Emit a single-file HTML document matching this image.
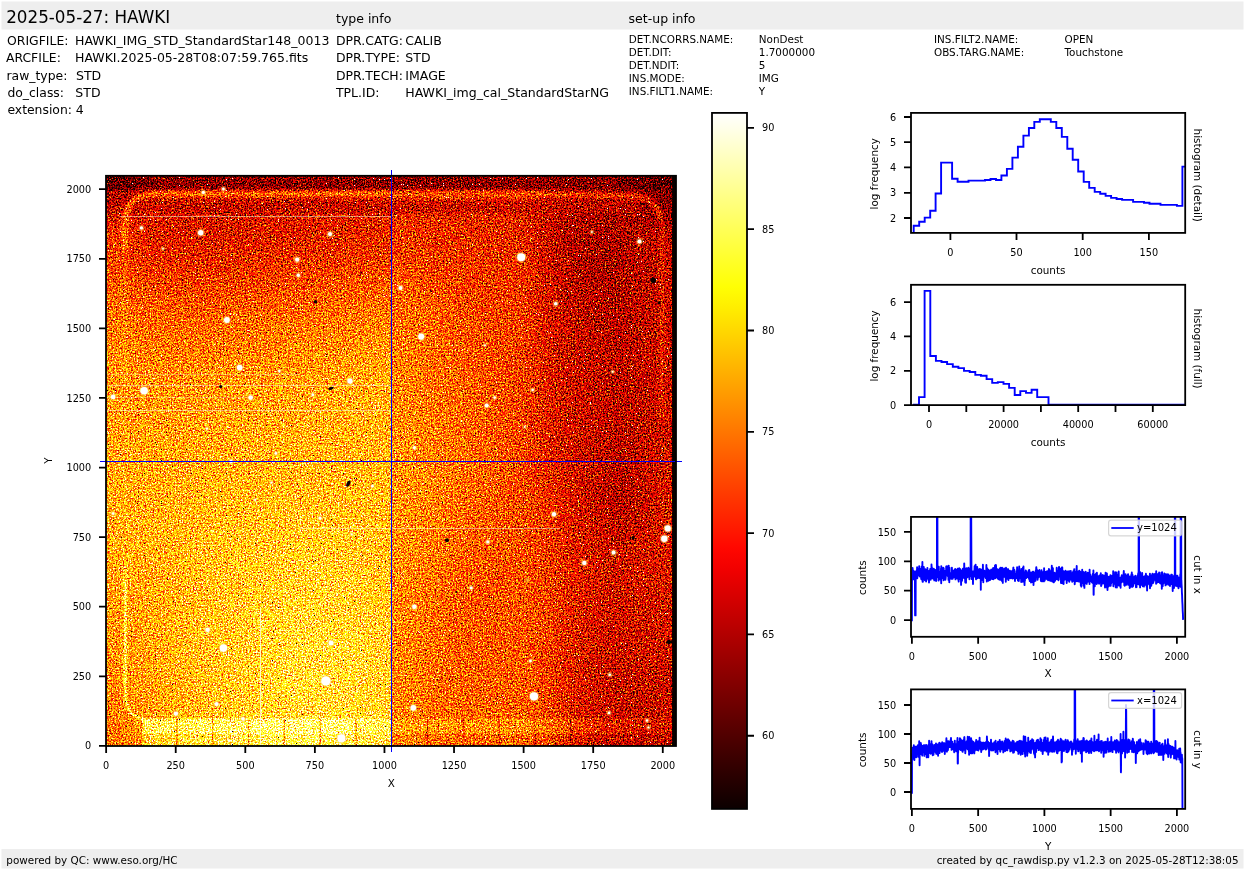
<!DOCTYPE html>
<html><head><meta charset="utf-8"><title>HAWKI raw display</title>
<style>
html,body{margin:0;padding:0;background:#fff;overflow:hidden}
svg{display:block}
text{font-family:'DejaVu Sans','Liberation Sans',sans-serif;fill:#000;white-space:pre}
</style></head><body>
<svg width="1245" height="870" viewBox="0 0 1245 870">
<rect width="1245" height="870" fill="#ffffff"/>
<g opacity="0.999">
<rect x="1.5" y="1.5" width="1242" height="28" fill="#eeeeee"/>
<rect x="1.5" y="849" width="1242" height="19.5" fill="#eeeeee"/>
<text x="6.2" y="23.4" font-size="16.75" text-anchor="start" >2025-05-27: HAWKI</text>
<text x="336" y="22.6" font-size="12.5" text-anchor="start" >type info</text>
<text x="628.6" y="22.6" font-size="12.5" text-anchor="start" >set-up info</text>
<text x="7.1" y="45.1" font-size="12.4" text-anchor="start" >ORIGFILE:</text>
<text x="75" y="45.1" font-size="12.52" text-anchor="start" >HAWKI_IMG_STD_StandardStar148_0013</text>
<text x="6.0" y="61.8" font-size="12.4" text-anchor="start" >ARCFILE:</text>
<text x="75" y="61.8" font-size="12.52" text-anchor="start" >HAWKI.2025-05-28T08:07:59.765.fits</text>
<text x="6.5" y="80.3" font-size="12.4" text-anchor="start" >raw_type:</text>
<text x="76" y="80.3" font-size="12.52" text-anchor="start" >STD</text>
<text x="7.4" y="96.9" font-size="12.4" text-anchor="start" >do_class:</text>
<text x="75.3" y="96.9" font-size="12.52" text-anchor="start" >STD</text>
<text x="7.4" y="114.2" font-size="12.4" text-anchor="start" >extension:</text>
<text x="75.7" y="114.2" font-size="12.52" text-anchor="start" >4</text>
<text x="336" y="45.1" font-size="12.45" text-anchor="start" >DPR.CATG:</text>
<text x="405.3" y="45.1" font-size="12.52" text-anchor="start" >CALIB</text>
<text x="336" y="61.8" font-size="12.45" text-anchor="start" >DPR.TYPE:</text>
<text x="405.3" y="61.8" font-size="12.52" text-anchor="start" >STD</text>
<text x="336" y="80.3" font-size="12.45" text-anchor="start" >DPR.TECH:</text>
<text x="405.3" y="80.3" font-size="12.52" text-anchor="start" >IMAGE</text>
<text x="336" y="96.9" font-size="12.45" text-anchor="start" >TPL.ID:</text>
<text x="405.3" y="96.9" font-size="12.52" text-anchor="start" >HAWKI_img_cal_StandardStarNG</text>
<text x="628.8" y="42.7" font-size="10.4" text-anchor="start" >DET.NCORRS.NAME:</text>
<text x="758.8" y="42.7" font-size="10.4" text-anchor="start" >NonDest</text>
<text x="628.8" y="55.7" font-size="10.4" text-anchor="start" >DET.DIT:</text>
<text x="758.8" y="55.7" font-size="10.4" text-anchor="start" >1.7000000</text>
<text x="628.8" y="68.6" font-size="10.4" text-anchor="start" >DET.NDIT:</text>
<text x="758.8" y="68.6" font-size="10.4" text-anchor="start" >5</text>
<text x="628.8" y="81.6" font-size="10.4" text-anchor="start" >INS.MODE:</text>
<text x="758.8" y="81.6" font-size="10.4" text-anchor="start" >IMG</text>
<text x="628.8" y="94.6" font-size="10.4" text-anchor="start" >INS.FILT1.NAME:</text>
<text x="758.8" y="94.6" font-size="10.4" text-anchor="start" >Y</text>
<text x="934" y="42.7" font-size="10.4" text-anchor="start" >INS.FILT2.NAME:</text>
<text x="1064.5" y="42.7" font-size="10.4" text-anchor="start" >OPEN</text>
<text x="934" y="55.7" font-size="10.4" text-anchor="start" >OBS.TARG.NAME:</text>
<text x="1064.5" y="55.7" font-size="10.4" text-anchor="start" >Touchstone</text>
<text x="6.3" y="863.6" font-size="10.4" text-anchor="start" >powered by QC: www.eso.org/HC</text>
<text x="1238.6" y="863.6" font-size="10.4" text-anchor="end" >created by qc_rawdisp.py v1.2.3 on 2025-05-28T12:38:05</text>
<defs>
<filter id="hot" filterUnits="userSpaceOnUse" x="106.0" y="175.8" width="570.0" height="570.2" color-interpolation-filters="sRGB">
<feTurbulence type="fractalNoise" baseFrequency="0.6" numOctaves="2" seed="7" result="ta"/>
<feColorMatrix in="ta" type="matrix" values="0 0 0 1 0  0 0 0 1 0  0 0 0 1 0  0 0 0 0 1" result="na"/>
<feTurbulence type="fractalNoise" baseFrequency="0.73" numOctaves="2" seed="31" result="tb"/>
<feColorMatrix in="tb" type="matrix" values="0 0 0 1 0  0 0 0 1 0  0 0 0 1 0  0 0 0 0 1" result="nb"/>
<feComposite in="na" in2="nb" operator="arithmetic" k1="0" k2="0.5" k3="0.5" k4="0" result="n"/>
<feTurbulence type="fractalNoise" baseFrequency="0.83" numOctaves="1" seed="23" result="t2"/>
<feColorMatrix in="t2" type="matrix" values="0 0 0 1 0  0 0 0 1 0  0 0 0 1 0  0 0 0 0 1" result="n2"/>
<feComponentTransfer in="n2" result="dk"><feFuncR type="discrete" tableValues="1 1 1 1 1 1 1 1 1 1 1 0 0 0 0 0 0 0 0 0 0 0 0 0 0 0 0 0 0 0 0 0 0 0 0 0 0 0 0 0 0 0 0 0 0 0 0 0 0 0"/><feFuncG type="discrete" tableValues="1 1 1 1 1 1 1 1 1 1 1 0 0 0 0 0 0 0 0 0 0 0 0 0 0 0 0 0 0 0 0 0 0 0 0 0 0 0 0 0 0 0 0 0 0 0 0 0 0 0"/><feFuncB type="discrete" tableValues="1 1 1 1 1 1 1 1 1 1 1 0 0 0 0 0 0 0 0 0 0 0 0 0 0 0 0 0 0 0 0 0 0 0 0 0 0 0 0 0 0 0 0 0 0 0 0 0 0 0"/></feComponentTransfer>
<feComponentTransfer in="n2" result="wh"><feFuncR type="discrete" tableValues="0 0 0 0 0 0 0 0 0 0 0 0 0 0 0 0 0 0 0 0 0 0 0 0 0 0 0 0 0 0 0 0 0 0 0 0 0 0 1 1 1 1 1 1 1 1 1 1 1 1"/><feFuncG type="discrete" tableValues="0 0 0 0 0 0 0 0 0 0 0 0 0 0 0 0 0 0 0 0 0 0 0 0 0 0 0 0 0 0 0 0 0 0 0 0 0 0 1 1 1 1 1 1 1 1 1 1 1 1"/><feFuncB type="discrete" tableValues="0 0 0 0 0 0 0 0 0 0 0 0 0 0 0 0 0 0 0 0 0 0 0 0 0 0 0 0 0 0 0 0 0 0 0 0 0 0 1 1 1 1 1 1 1 1 1 1 1 1"/></feComponentTransfer>
<feComposite in="SourceGraphic" in2="n" operator="arithmetic" k1="0" k2="1" k3="1.7" k4="-0.85" result="v0"/>
<feComposite in="v0" in2="dk" operator="arithmetic" k1="0" k2="1" k3="-1" k4="0" result="v1"/>
<feComposite in="v1" in2="wh" operator="arithmetic" k1="0" k2="1" k3="1" k4="0" result="v"/>
<feComponentTransfer in="v"><feFuncR type="table" tableValues="0.042 0.083 0.124 0.165 0.206 0.247 0.288 0.329 0.370 0.411 0.452 0.493 0.534 0.575 0.616 0.657 0.698 0.739 0.780 0.821 0.862 0.903 0.944 0.985 1.000 1.000 1.000 1.000 1.000 1.000 1.000 1.000 1.000 1.000 1.000 1.000 1.000 1.000 1.000 1.000 1.000 1.000 1.000 1.000 1.000 1.000 1.000 1.000 1.000 1.000 1.000 1.000 1.000 1.000 1.000 1.000 1.000 1.000 1.000 1.000 1.000 1.000 1.000 1.000 1.000"/><feFuncG type="table" tableValues="0.000 0.000 0.000 0.000 0.000 0.000 0.000 0.000 0.000 0.000 0.000 0.000 0.000 0.000 0.000 0.000 0.000 0.000 0.000 0.000 0.000 0.000 0.000 0.000 0.026 0.067 0.108 0.149 0.190 0.231 0.272 0.313 0.354 0.395 0.436 0.477 0.518 0.559 0.600 0.641 0.682 0.723 0.764 0.805 0.846 0.887 0.928 0.969 1.000 1.000 1.000 1.000 1.000 1.000 1.000 1.000 1.000 1.000 1.000 1.000 1.000 1.000 1.000 1.000 1.000"/><feFuncB type="table" tableValues="0.000 0.000 0.000 0.000 0.000 0.000 0.000 0.000 0.000 0.000 0.000 0.000 0.000 0.000 0.000 0.000 0.000 0.000 0.000 0.000 0.000 0.000 0.000 0.000 0.000 0.000 0.000 0.000 0.000 0.000 0.000 0.000 0.000 0.000 0.000 0.000 0.000 0.000 0.000 0.000 0.000 0.000 0.000 0.000 0.000 0.000 0.000 0.000 0.016 0.077 0.139 0.200 0.262 0.323 0.385 0.446 0.508 0.569 0.631 0.692 0.754 0.815 0.877 0.938 1.000"/></feComponentTransfer>
</filter>
<filter id="blur" filterUnits="userSpaceOnUse" x="46.0" y="115.80000000000001" width="690.0" height="690.2" color-interpolation-filters="sRGB"><feGaussianBlur stdDeviation="9"/></filter>
<clipPath id="cL"><rect x="106.0" y="175.8" width="285.0" height="570.2"/></clipPath>
<clipPath id="cR"><rect x="391.0" y="175.8" width="285.0" height="570.2"/></clipPath>
<linearGradient id="gTop" x1="0" y1="0" x2="0" y2="1"><stop offset="0" stop-color="#000" stop-opacity="0.62"/><stop offset="0.45" stop-color="#000" stop-opacity="0.5"/><stop offset="0.85" stop-color="#000" stop-opacity="0.22"/><stop offset="1" stop-color="#000" stop-opacity="0"/></linearGradient>
<linearGradient id="gTop2" x1="0" y1="0" x2="0" y2="1"><stop offset="0" stop-color="#000" stop-opacity="0"/><stop offset="0.3" stop-color="#000" stop-opacity="0.16"/><stop offset="0.8" stop-color="#000" stop-opacity="0.12"/><stop offset="1" stop-color="#000" stop-opacity="0"/></linearGradient>
<radialGradient id="gTL" cx="106.0" cy="175.8" r="60" gradientUnits="userSpaceOnUse"><stop offset="0" stop-color="#000" stop-opacity="0.5"/><stop offset="0.5" stop-color="#000" stop-opacity="0.28"/><stop offset="1" stop-color="#000" stop-opacity="0"/></radialGradient>
<radialGradient id="gTR" cx="676.0" cy="175.8" r="70" gradientUnits="userSpaceOnUse"><stop offset="0" stop-color="#000" stop-opacity="0.6"/><stop offset="0.5" stop-color="#000" stop-opacity="0.3"/><stop offset="1" stop-color="#000" stop-opacity="0"/></radialGradient>
<linearGradient id="gBandL" x1="0" y1="0" x2="1" y2="0" gradientUnits="objectBoundingBox"><stop offset="0" stop-color="#ffffff" stop-opacity="0"/><stop offset="0.115" stop-color="#ffffff" stop-opacity="0.0"/><stop offset="0.13" stop-color="#ffffff" stop-opacity="0.3"/><stop offset="0.8" stop-color="#ffffff" stop-opacity="0.3"/><stop offset="1" stop-color="#ffffff" stop-opacity="0.15"/></linearGradient>
<linearGradient id="gBandR" x1="0" y1="0" x2="1" y2="0" gradientUnits="objectBoundingBox"><stop offset="0" stop-color="#ffffff" stop-opacity="0.16"/><stop offset="0.55" stop-color="#ffffff" stop-opacity="0.16"/><stop offset="0.75" stop-color="#ffffff" stop-opacity="0.1"/><stop offset="1" stop-color="#ffffff" stop-opacity="0.04"/></linearGradient>
<filter id="b2" filterUnits="userSpaceOnUse" x="86.0" y="155.8" width="610.0" height="610.2"><feGaussianBlur stdDeviation="1.6"/></filter>
</defs>
<g filter="url(#hot)">
<g clip-path="url(#cL)"><g filter="url(#blur)">
<rect x="61.0" y="130.8" width="69.0" height="69.0" fill="#656565"/>
<rect x="61.0" y="199.6" width="69.0" height="24.1" fill="#676767"/>
<rect x="61.0" y="223.3" width="69.0" height="24.1" fill="#6b6b6b"/>
<rect x="61.0" y="247.1" width="69.0" height="24.1" fill="#717171"/>
<rect x="61.0" y="270.8" width="69.0" height="24.1" fill="#7b7b7b"/>
<rect x="61.0" y="294.6" width="69.0" height="24.1" fill="#858585"/>
<rect x="61.0" y="318.3" width="69.0" height="24.1" fill="#8d8d8d"/>
<rect x="61.0" y="342.1" width="69.0" height="24.1" fill="#929292"/>
<rect x="61.0" y="365.8" width="69.0" height="24.1" fill="#979797"/>
<rect x="61.0" y="389.6" width="69.0" height="24.1" fill="#9b9b9b"/>
<rect x="61.0" y="413.3" width="69.0" height="24.1" fill="#9d9d9d"/>
<rect x="61.0" y="437.1" width="69.0" height="24.1" fill="#a0a0a0"/>
<rect x="61.0" y="460.8" width="69.0" height="24.1" fill="#a1a1a1"/>
<rect x="61.0" y="484.6" width="69.0" height="24.1" fill="#a3a3a3"/>
<rect x="61.0" y="508.3" width="69.0" height="24.0" fill="#a4a4a4"/>
<rect x="61.0" y="532.0" width="69.0" height="24.1" fill="#a3a3a3"/>
<rect x="61.0" y="555.8" width="69.0" height="24.1" fill="#a0a0a0"/>
<rect x="61.0" y="579.5" width="69.0" height="24.1" fill="#9d9d9d"/>
<rect x="61.0" y="603.3" width="69.0" height="24.1" fill="#9a9a9a"/>
<rect x="61.0" y="627.0" width="69.0" height="24.1" fill="#979797"/>
<rect x="61.0" y="650.8" width="69.0" height="24.1" fill="#959595"/>
<rect x="61.0" y="674.5" width="69.0" height="24.1" fill="#919191"/>
<rect x="61.0" y="698.3" width="69.0" height="24.1" fill="#8d8d8d"/>
<rect x="61.0" y="722.0" width="69.0" height="69.0" fill="#8a8a8a"/>
<rect x="129.8" y="130.8" width="24.1" height="69.0" fill="#5b5b5b"/>
<rect x="129.8" y="199.6" width="24.1" height="24.1" fill="#5b5b5b"/>
<rect x="129.8" y="223.3" width="24.1" height="24.1" fill="#5e5e5e"/>
<rect x="129.8" y="247.1" width="24.1" height="24.1" fill="#666666"/>
<rect x="129.8" y="270.8" width="24.1" height="24.1" fill="#727272"/>
<rect x="129.8" y="294.6" width="24.1" height="24.1" fill="#7e7e7e"/>
<rect x="129.8" y="318.3" width="24.1" height="24.1" fill="#878787"/>
<rect x="129.8" y="342.1" width="24.1" height="24.1" fill="#8e8e8e"/>
<rect x="129.8" y="365.8" width="24.1" height="24.1" fill="#959595"/>
<rect x="129.8" y="389.6" width="24.1" height="24.1" fill="#9a9a9a"/>
<rect x="129.8" y="413.3" width="24.1" height="24.1" fill="#9d9d9d"/>
<rect x="129.8" y="437.1" width="24.1" height="24.1" fill="#a0a0a0"/>
<rect x="129.8" y="460.8" width="24.1" height="24.1" fill="#a2a2a2"/>
<rect x="129.8" y="484.6" width="24.1" height="24.1" fill="#a4a4a4"/>
<rect x="129.8" y="508.3" width="24.1" height="24.0" fill="#a6a6a6"/>
<rect x="129.8" y="532.0" width="24.1" height="24.1" fill="#a5a5a5"/>
<rect x="129.8" y="555.8" width="24.1" height="24.1" fill="#a3a3a3"/>
<rect x="129.8" y="579.5" width="24.1" height="24.1" fill="#a2a2a2"/>
<rect x="129.8" y="603.3" width="24.1" height="24.1" fill="#a0a0a0"/>
<rect x="129.8" y="627.0" width="24.1" height="24.1" fill="#9f9f9f"/>
<rect x="129.8" y="650.8" width="24.1" height="24.1" fill="#9d9d9d"/>
<rect x="129.8" y="674.5" width="24.1" height="24.1" fill="#9c9c9c"/>
<rect x="129.8" y="698.3" width="24.1" height="24.1" fill="#999999"/>
<rect x="129.8" y="722.0" width="24.1" height="69.0" fill="#979797"/>
<rect x="153.5" y="130.8" width="24.1" height="69.0" fill="#585858"/>
<rect x="153.5" y="199.6" width="24.1" height="24.1" fill="#585858"/>
<rect x="153.5" y="223.3" width="24.1" height="24.1" fill="#5c5c5c"/>
<rect x="153.5" y="247.1" width="24.1" height="24.1" fill="#646464"/>
<rect x="153.5" y="270.8" width="24.1" height="24.1" fill="#707070"/>
<rect x="153.5" y="294.6" width="24.1" height="24.1" fill="#7c7c7c"/>
<rect x="153.5" y="318.3" width="24.1" height="24.1" fill="#868686"/>
<rect x="153.5" y="342.1" width="24.1" height="24.1" fill="#8d8d8d"/>
<rect x="153.5" y="365.8" width="24.1" height="24.1" fill="#959595"/>
<rect x="153.5" y="389.6" width="24.1" height="24.1" fill="#9a9a9a"/>
<rect x="153.5" y="413.3" width="24.1" height="24.1" fill="#9d9d9d"/>
<rect x="153.5" y="437.1" width="24.1" height="24.1" fill="#a1a1a1"/>
<rect x="153.5" y="460.8" width="24.1" height="24.1" fill="#a3a3a3"/>
<rect x="153.5" y="484.6" width="24.1" height="24.1" fill="#a5a5a5"/>
<rect x="153.5" y="508.3" width="24.1" height="24.0" fill="#a7a7a7"/>
<rect x="153.5" y="532.0" width="24.1" height="24.1" fill="#a8a8a8"/>
<rect x="153.5" y="555.8" width="24.1" height="24.1" fill="#a7a7a7"/>
<rect x="153.5" y="579.5" width="24.1" height="24.1" fill="#a6a6a6"/>
<rect x="153.5" y="603.3" width="24.1" height="24.1" fill="#a5a5a5"/>
<rect x="153.5" y="627.0" width="24.1" height="24.1" fill="#a5a5a5"/>
<rect x="153.5" y="650.8" width="24.1" height="24.1" fill="#a4a4a4"/>
<rect x="153.5" y="674.5" width="24.1" height="24.1" fill="#a3a3a3"/>
<rect x="153.5" y="698.3" width="24.1" height="24.1" fill="#a0a0a0"/>
<rect x="153.5" y="722.0" width="24.1" height="69.0" fill="#9f9f9f"/>
<rect x="177.2" y="130.8" width="24.1" height="69.0" fill="#555555"/>
<rect x="177.2" y="199.6" width="24.1" height="24.1" fill="#555555"/>
<rect x="177.2" y="223.3" width="24.1" height="24.1" fill="#5a5a5a"/>
<rect x="177.2" y="247.1" width="24.1" height="24.1" fill="#626262"/>
<rect x="177.2" y="270.8" width="24.1" height="24.1" fill="#6e6e6e"/>
<rect x="177.2" y="294.6" width="24.1" height="24.1" fill="#7a7a7a"/>
<rect x="177.2" y="318.3" width="24.1" height="24.1" fill="#848484"/>
<rect x="177.2" y="342.1" width="24.1" height="24.1" fill="#8d8d8d"/>
<rect x="177.2" y="365.8" width="24.1" height="24.1" fill="#959595"/>
<rect x="177.2" y="389.6" width="24.1" height="24.1" fill="#9b9b9b"/>
<rect x="177.2" y="413.3" width="24.1" height="24.1" fill="#9e9e9e"/>
<rect x="177.2" y="437.1" width="24.1" height="24.1" fill="#a1a1a1"/>
<rect x="177.2" y="460.8" width="24.1" height="24.1" fill="#a4a4a4"/>
<rect x="177.2" y="484.6" width="24.1" height="24.1" fill="#a7a7a7"/>
<rect x="177.2" y="508.3" width="24.1" height="24.0" fill="#a9a9a9"/>
<rect x="177.2" y="532.0" width="24.1" height="24.1" fill="#aaaaaa"/>
<rect x="177.2" y="555.8" width="24.1" height="24.1" fill="#ababab"/>
<rect x="177.2" y="579.5" width="24.1" height="24.1" fill="#ababab"/>
<rect x="177.2" y="603.3" width="24.1" height="24.1" fill="#ababab"/>
<rect x="177.2" y="627.0" width="24.1" height="24.1" fill="#ababab"/>
<rect x="177.2" y="650.8" width="24.1" height="24.1" fill="#aaaaaa"/>
<rect x="177.2" y="674.5" width="24.1" height="24.1" fill="#aaaaaa"/>
<rect x="177.2" y="698.3" width="24.1" height="24.1" fill="#a8a8a8"/>
<rect x="177.2" y="722.0" width="24.1" height="69.0" fill="#a7a7a7"/>
<rect x="201.0" y="130.8" width="24.1" height="69.0" fill="#545454"/>
<rect x="201.0" y="199.6" width="24.1" height="24.1" fill="#545454"/>
<rect x="201.0" y="223.3" width="24.1" height="24.1" fill="#595959"/>
<rect x="201.0" y="247.1" width="24.1" height="24.1" fill="#626262"/>
<rect x="201.0" y="270.8" width="24.1" height="24.1" fill="#6e6e6e"/>
<rect x="201.0" y="294.6" width="24.1" height="24.1" fill="#7b7b7b"/>
<rect x="201.0" y="318.3" width="24.1" height="24.1" fill="#858585"/>
<rect x="201.0" y="342.1" width="24.1" height="24.1" fill="#8d8d8d"/>
<rect x="201.0" y="365.8" width="24.1" height="24.1" fill="#969696"/>
<rect x="201.0" y="389.6" width="24.1" height="24.1" fill="#9c9c9c"/>
<rect x="201.0" y="413.3" width="24.1" height="24.1" fill="#9f9f9f"/>
<rect x="201.0" y="437.1" width="24.1" height="24.1" fill="#a2a2a2"/>
<rect x="201.0" y="460.8" width="24.1" height="24.1" fill="#a5a5a5"/>
<rect x="201.0" y="484.6" width="24.1" height="24.1" fill="#a8a8a8"/>
<rect x="201.0" y="508.3" width="24.1" height="24.0" fill="#ababab"/>
<rect x="201.0" y="532.0" width="24.1" height="24.1" fill="#adadad"/>
<rect x="201.0" y="555.8" width="24.1" height="24.1" fill="#aeaeae"/>
<rect x="201.0" y="579.5" width="24.1" height="24.1" fill="#afafaf"/>
<rect x="201.0" y="603.3" width="24.1" height="24.1" fill="#b0b0b0"/>
<rect x="201.0" y="627.0" width="24.1" height="24.1" fill="#b0b0b0"/>
<rect x="201.0" y="650.8" width="24.1" height="24.1" fill="#b0b0b0"/>
<rect x="201.0" y="674.5" width="24.1" height="24.1" fill="#b0b0b0"/>
<rect x="201.0" y="698.3" width="24.1" height="24.1" fill="#aeaeae"/>
<rect x="201.0" y="722.0" width="24.1" height="69.0" fill="#aeaeae"/>
<rect x="224.8" y="130.8" width="24.1" height="69.0" fill="#555555"/>
<rect x="224.8" y="199.6" width="24.1" height="24.1" fill="#555555"/>
<rect x="224.8" y="223.3" width="24.1" height="24.1" fill="#5a5a5a"/>
<rect x="224.8" y="247.1" width="24.1" height="24.1" fill="#636363"/>
<rect x="224.8" y="270.8" width="24.1" height="24.1" fill="#707070"/>
<rect x="224.8" y="294.6" width="24.1" height="24.1" fill="#7c7c7c"/>
<rect x="224.8" y="318.3" width="24.1" height="24.1" fill="#878787"/>
<rect x="224.8" y="342.1" width="24.1" height="24.1" fill="#8f8f8f"/>
<rect x="224.8" y="365.8" width="24.1" height="24.1" fill="#989898"/>
<rect x="224.8" y="389.6" width="24.1" height="24.1" fill="#9d9d9d"/>
<rect x="224.8" y="413.3" width="24.1" height="24.1" fill="#a1a1a1"/>
<rect x="224.8" y="437.1" width="24.1" height="24.1" fill="#a4a4a4"/>
<rect x="224.8" y="460.8" width="24.1" height="24.1" fill="#a7a7a7"/>
<rect x="224.8" y="484.6" width="24.1" height="24.1" fill="#aaaaaa"/>
<rect x="224.8" y="508.3" width="24.1" height="24.0" fill="#adadad"/>
<rect x="224.8" y="532.0" width="24.1" height="24.1" fill="#afafaf"/>
<rect x="224.8" y="555.8" width="24.1" height="24.1" fill="#b1b1b1"/>
<rect x="224.8" y="579.5" width="24.1" height="24.1" fill="#b2b2b2"/>
<rect x="224.8" y="603.3" width="24.1" height="24.1" fill="#b4b4b4"/>
<rect x="224.8" y="627.0" width="24.1" height="24.1" fill="#b4b4b4"/>
<rect x="224.8" y="650.8" width="24.1" height="24.1" fill="#b5b5b5"/>
<rect x="224.8" y="674.5" width="24.1" height="24.1" fill="#b5b5b5"/>
<rect x="224.8" y="698.3" width="24.1" height="24.1" fill="#b3b3b3"/>
<rect x="224.8" y="722.0" width="24.1" height="69.0" fill="#b3b3b3"/>
<rect x="248.5" y="130.8" width="24.1" height="69.0" fill="#565656"/>
<rect x="248.5" y="199.6" width="24.1" height="24.1" fill="#565656"/>
<rect x="248.5" y="223.3" width="24.1" height="24.1" fill="#5b5b5b"/>
<rect x="248.5" y="247.1" width="24.1" height="24.1" fill="#656565"/>
<rect x="248.5" y="270.8" width="24.1" height="24.1" fill="#717171"/>
<rect x="248.5" y="294.6" width="24.1" height="24.1" fill="#7e7e7e"/>
<rect x="248.5" y="318.3" width="24.1" height="24.1" fill="#898989"/>
<rect x="248.5" y="342.1" width="24.1" height="24.1" fill="#919191"/>
<rect x="248.5" y="365.8" width="24.1" height="24.1" fill="#999999"/>
<rect x="248.5" y="389.6" width="24.1" height="24.1" fill="#9f9f9f"/>
<rect x="248.5" y="413.3" width="24.1" height="24.1" fill="#a2a2a2"/>
<rect x="248.5" y="437.1" width="24.1" height="24.1" fill="#a5a5a5"/>
<rect x="248.5" y="460.8" width="24.1" height="24.1" fill="#a8a8a8"/>
<rect x="248.5" y="484.6" width="24.1" height="24.1" fill="#ababab"/>
<rect x="248.5" y="508.3" width="24.1" height="24.0" fill="#aeaeae"/>
<rect x="248.5" y="532.0" width="24.1" height="24.1" fill="#b1b1b1"/>
<rect x="248.5" y="555.8" width="24.1" height="24.1" fill="#b4b4b4"/>
<rect x="248.5" y="579.5" width="24.1" height="24.1" fill="#b6b6b6"/>
<rect x="248.5" y="603.3" width="24.1" height="24.1" fill="#b8b8b8"/>
<rect x="248.5" y="627.0" width="24.1" height="24.1" fill="#b9b9b9"/>
<rect x="248.5" y="650.8" width="24.1" height="24.1" fill="#bababa"/>
<rect x="248.5" y="674.5" width="24.1" height="24.1" fill="#bababa"/>
<rect x="248.5" y="698.3" width="24.1" height="24.1" fill="#b8b8b8"/>
<rect x="248.5" y="722.0" width="24.1" height="69.0" fill="#b8b8b8"/>
<rect x="272.2" y="130.8" width="24.1" height="69.0" fill="#565656"/>
<rect x="272.2" y="199.6" width="24.1" height="24.1" fill="#565656"/>
<rect x="272.2" y="223.3" width="24.1" height="24.1" fill="#5c5c5c"/>
<rect x="272.2" y="247.1" width="24.1" height="24.1" fill="#666666"/>
<rect x="272.2" y="270.8" width="24.1" height="24.1" fill="#737373"/>
<rect x="272.2" y="294.6" width="24.1" height="24.1" fill="#808080"/>
<rect x="272.2" y="318.3" width="24.1" height="24.1" fill="#8b8b8b"/>
<rect x="272.2" y="342.1" width="24.1" height="24.1" fill="#939393"/>
<rect x="272.2" y="365.8" width="24.1" height="24.1" fill="#9b9b9b"/>
<rect x="272.2" y="389.6" width="24.1" height="24.1" fill="#a1a1a1"/>
<rect x="272.2" y="413.3" width="24.1" height="24.1" fill="#a4a4a4"/>
<rect x="272.2" y="437.1" width="24.1" height="24.1" fill="#a6a6a6"/>
<rect x="272.2" y="460.8" width="24.1" height="24.1" fill="#a9a9a9"/>
<rect x="272.2" y="484.6" width="24.1" height="24.1" fill="#adadad"/>
<rect x="272.2" y="508.3" width="24.1" height="24.0" fill="#b0b0b0"/>
<rect x="272.2" y="532.0" width="24.1" height="24.1" fill="#b3b3b3"/>
<rect x="272.2" y="555.8" width="24.1" height="24.1" fill="#b6b6b6"/>
<rect x="272.2" y="579.5" width="24.1" height="24.1" fill="#b9b9b9"/>
<rect x="272.2" y="603.3" width="24.1" height="24.1" fill="#bcbcbc"/>
<rect x="272.2" y="627.0" width="24.1" height="24.1" fill="#bdbdbd"/>
<rect x="272.2" y="650.8" width="24.1" height="24.1" fill="#bebebe"/>
<rect x="272.2" y="674.5" width="24.1" height="24.1" fill="#bfbfbf"/>
<rect x="272.2" y="698.3" width="24.1" height="24.1" fill="#bdbdbd"/>
<rect x="272.2" y="722.0" width="24.1" height="69.0" fill="#bdbdbd"/>
<rect x="296.0" y="130.8" width="24.1" height="69.0" fill="#585858"/>
<rect x="296.0" y="199.6" width="24.1" height="24.1" fill="#585858"/>
<rect x="296.0" y="223.3" width="24.1" height="24.1" fill="#5d5d5d"/>
<rect x="296.0" y="247.1" width="24.1" height="24.1" fill="#676767"/>
<rect x="296.0" y="270.8" width="24.1" height="24.1" fill="#757575"/>
<rect x="296.0" y="294.6" width="24.1" height="24.1" fill="#828282"/>
<rect x="296.0" y="318.3" width="24.1" height="24.1" fill="#8d8d8d"/>
<rect x="296.0" y="342.1" width="24.1" height="24.1" fill="#959595"/>
<rect x="296.0" y="365.8" width="24.1" height="24.1" fill="#9d9d9d"/>
<rect x="296.0" y="389.6" width="24.1" height="24.1" fill="#a3a3a3"/>
<rect x="296.0" y="413.3" width="24.1" height="24.1" fill="#a5a5a5"/>
<rect x="296.0" y="437.1" width="24.1" height="24.1" fill="#a7a7a7"/>
<rect x="296.0" y="460.8" width="24.1" height="24.1" fill="#aaaaaa"/>
<rect x="296.0" y="484.6" width="24.1" height="24.1" fill="#adadad"/>
<rect x="296.0" y="508.3" width="24.1" height="24.0" fill="#b1b1b1"/>
<rect x="296.0" y="532.0" width="24.1" height="24.1" fill="#b4b4b4"/>
<rect x="296.0" y="555.8" width="24.1" height="24.1" fill="#b7b7b7"/>
<rect x="296.0" y="579.5" width="24.1" height="24.1" fill="#bababa"/>
<rect x="296.0" y="603.3" width="24.1" height="24.1" fill="#bdbdbd"/>
<rect x="296.0" y="627.0" width="24.1" height="24.1" fill="#bebebe"/>
<rect x="296.0" y="650.8" width="24.1" height="24.1" fill="#c0c0c0"/>
<rect x="296.0" y="674.5" width="24.1" height="24.1" fill="#c1c1c1"/>
<rect x="296.0" y="698.3" width="24.1" height="24.1" fill="#bfbfbf"/>
<rect x="296.0" y="722.0" width="24.1" height="69.0" fill="#bfbfbf"/>
<rect x="319.8" y="130.8" width="24.1" height="69.0" fill="#595959"/>
<rect x="319.8" y="199.6" width="24.1" height="24.1" fill="#595959"/>
<rect x="319.8" y="223.3" width="24.1" height="24.1" fill="#5f5f5f"/>
<rect x="319.8" y="247.1" width="24.1" height="24.1" fill="#696969"/>
<rect x="319.8" y="270.8" width="24.1" height="24.1" fill="#777777"/>
<rect x="319.8" y="294.6" width="24.1" height="24.1" fill="#848484"/>
<rect x="319.8" y="318.3" width="24.1" height="24.1" fill="#8f8f8f"/>
<rect x="319.8" y="342.1" width="24.1" height="24.1" fill="#979797"/>
<rect x="319.8" y="365.8" width="24.1" height="24.1" fill="#9f9f9f"/>
<rect x="319.8" y="389.6" width="24.1" height="24.1" fill="#a4a4a4"/>
<rect x="319.8" y="413.3" width="24.1" height="24.1" fill="#a6a6a6"/>
<rect x="319.8" y="437.1" width="24.1" height="24.1" fill="#a7a7a7"/>
<rect x="319.8" y="460.8" width="24.1" height="24.1" fill="#aaaaaa"/>
<rect x="319.8" y="484.6" width="24.1" height="24.1" fill="#adadad"/>
<rect x="319.8" y="508.3" width="24.1" height="24.0" fill="#b0b0b0"/>
<rect x="319.8" y="532.0" width="24.1" height="24.1" fill="#b3b3b3"/>
<rect x="319.8" y="555.8" width="24.1" height="24.1" fill="#b6b6b6"/>
<rect x="319.8" y="579.5" width="24.1" height="24.1" fill="#b9b9b9"/>
<rect x="319.8" y="603.3" width="24.1" height="24.1" fill="#bbbbbb"/>
<rect x="319.8" y="627.0" width="24.1" height="24.1" fill="#bdbdbd"/>
<rect x="319.8" y="650.8" width="24.1" height="24.1" fill="#bfbfbf"/>
<rect x="319.8" y="674.5" width="24.1" height="24.1" fill="#c0c0c0"/>
<rect x="319.8" y="698.3" width="24.1" height="24.1" fill="#bfbfbf"/>
<rect x="319.8" y="722.0" width="24.1" height="69.0" fill="#bebebe"/>
<rect x="343.5" y="130.8" width="24.1" height="69.0" fill="#5b5b5b"/>
<rect x="343.5" y="199.6" width="24.1" height="24.1" fill="#5b5b5b"/>
<rect x="343.5" y="223.3" width="24.1" height="24.1" fill="#606060"/>
<rect x="343.5" y="247.1" width="24.1" height="24.1" fill="#6b6b6b"/>
<rect x="343.5" y="270.8" width="24.1" height="24.1" fill="#797979"/>
<rect x="343.5" y="294.6" width="24.1" height="24.1" fill="#868686"/>
<rect x="343.5" y="318.3" width="24.1" height="24.1" fill="#919191"/>
<rect x="343.5" y="342.1" width="24.1" height="24.1" fill="#999999"/>
<rect x="343.5" y="365.8" width="24.1" height="24.1" fill="#a1a1a1"/>
<rect x="343.5" y="389.6" width="24.1" height="24.1" fill="#a5a5a5"/>
<rect x="343.5" y="413.3" width="24.1" height="24.1" fill="#a7a7a7"/>
<rect x="343.5" y="437.1" width="24.1" height="24.1" fill="#a8a8a8"/>
<rect x="343.5" y="460.8" width="24.1" height="24.1" fill="#aaaaaa"/>
<rect x="343.5" y="484.6" width="24.1" height="24.1" fill="#adadad"/>
<rect x="343.5" y="508.3" width="24.1" height="24.0" fill="#afafaf"/>
<rect x="343.5" y="532.0" width="24.1" height="24.1" fill="#b2b2b2"/>
<rect x="343.5" y="555.8" width="24.1" height="24.1" fill="#b5b5b5"/>
<rect x="343.5" y="579.5" width="24.1" height="24.1" fill="#b7b7b7"/>
<rect x="343.5" y="603.3" width="24.1" height="24.1" fill="#bababa"/>
<rect x="343.5" y="627.0" width="24.1" height="24.1" fill="#bcbcbc"/>
<rect x="343.5" y="650.8" width="24.1" height="24.1" fill="#bebebe"/>
<rect x="343.5" y="674.5" width="24.1" height="24.1" fill="#bfbfbf"/>
<rect x="343.5" y="698.3" width="24.1" height="24.1" fill="#bebebe"/>
<rect x="343.5" y="722.0" width="24.1" height="69.0" fill="#bdbdbd"/>
<rect x="367.2" y="130.8" width="69.0" height="69.0" fill="#5d5d5d"/>
<rect x="367.2" y="199.6" width="69.0" height="24.1" fill="#5d5d5d"/>
<rect x="367.2" y="223.3" width="69.0" height="24.1" fill="#636363"/>
<rect x="367.2" y="247.1" width="69.0" height="24.1" fill="#6d6d6d"/>
<rect x="367.2" y="270.8" width="69.0" height="24.1" fill="#7a7a7a"/>
<rect x="367.2" y="294.6" width="69.0" height="24.1" fill="#888888"/>
<rect x="367.2" y="318.3" width="69.0" height="24.1" fill="#939393"/>
<rect x="367.2" y="342.1" width="69.0" height="24.1" fill="#9a9a9a"/>
<rect x="367.2" y="365.8" width="69.0" height="24.1" fill="#a2a2a2"/>
<rect x="367.2" y="389.6" width="69.0" height="24.1" fill="#a6a6a6"/>
<rect x="367.2" y="413.3" width="69.0" height="24.1" fill="#a6a6a6"/>
<rect x="367.2" y="437.1" width="69.0" height="24.1" fill="#a7a7a7"/>
<rect x="367.2" y="460.8" width="69.0" height="24.1" fill="#a8a8a8"/>
<rect x="367.2" y="484.6" width="69.0" height="24.1" fill="#aaaaaa"/>
<rect x="367.2" y="508.3" width="69.0" height="24.0" fill="#acacac"/>
<rect x="367.2" y="532.0" width="69.0" height="24.1" fill="#aeaeae"/>
<rect x="367.2" y="555.8" width="69.0" height="24.1" fill="#b0b0b0"/>
<rect x="367.2" y="579.5" width="69.0" height="24.1" fill="#b2b2b2"/>
<rect x="367.2" y="603.3" width="69.0" height="24.1" fill="#b4b4b4"/>
<rect x="367.2" y="627.0" width="69.0" height="24.1" fill="#b6b6b6"/>
<rect x="367.2" y="650.8" width="69.0" height="24.1" fill="#b8b8b8"/>
<rect x="367.2" y="674.5" width="69.0" height="24.1" fill="#b9b9b9"/>
<rect x="367.2" y="698.3" width="69.0" height="24.1" fill="#b9b9b9"/>
<rect x="367.2" y="722.0" width="69.0" height="69.0" fill="#b8b8b8"/>
</g></g>
<g clip-path="url(#cR)"><g filter="url(#blur)">
<rect x="346.0" y="130.8" width="69.0" height="69.0" fill="#656565"/>
<rect x="346.0" y="199.6" width="69.0" height="24.1" fill="#676767"/>
<rect x="346.0" y="223.3" width="69.0" height="24.1" fill="#6b6b6b"/>
<rect x="346.0" y="247.1" width="69.0" height="24.1" fill="#717171"/>
<rect x="346.0" y="270.8" width="69.0" height="24.1" fill="#7a7a7a"/>
<rect x="346.0" y="294.6" width="69.0" height="24.1" fill="#838383"/>
<rect x="346.0" y="318.3" width="69.0" height="24.1" fill="#898989"/>
<rect x="346.0" y="342.1" width="69.0" height="24.1" fill="#8c8c8c"/>
<rect x="346.0" y="365.8" width="69.0" height="24.1" fill="#8f8f8f"/>
<rect x="346.0" y="389.6" width="69.0" height="24.1" fill="#929292"/>
<rect x="346.0" y="413.3" width="69.0" height="24.1" fill="#949494"/>
<rect x="346.0" y="437.1" width="69.0" height="24.1" fill="#969696"/>
<rect x="346.0" y="460.8" width="69.0" height="24.1" fill="#979797"/>
<rect x="346.0" y="484.6" width="69.0" height="24.1" fill="#979797"/>
<rect x="346.0" y="508.3" width="69.0" height="24.0" fill="#969696"/>
<rect x="346.0" y="532.0" width="69.0" height="24.1" fill="#969696"/>
<rect x="346.0" y="555.8" width="69.0" height="24.1" fill="#959595"/>
<rect x="346.0" y="579.5" width="69.0" height="24.1" fill="#929292"/>
<rect x="346.0" y="603.3" width="69.0" height="24.1" fill="#929292"/>
<rect x="346.0" y="627.0" width="69.0" height="24.1" fill="#929292"/>
<rect x="346.0" y="650.8" width="69.0" height="24.1" fill="#929292"/>
<rect x="346.0" y="674.5" width="69.0" height="24.1" fill="#919191"/>
<rect x="346.0" y="698.3" width="69.0" height="24.1" fill="#8f8f8f"/>
<rect x="346.0" y="722.0" width="69.0" height="69.0" fill="#8d8d8d"/>
<rect x="414.8" y="130.8" width="24.1" height="69.0" fill="#636363"/>
<rect x="414.8" y="199.6" width="24.1" height="24.1" fill="#646464"/>
<rect x="414.8" y="223.3" width="24.1" height="24.1" fill="#686868"/>
<rect x="414.8" y="247.1" width="24.1" height="24.1" fill="#6e6e6e"/>
<rect x="414.8" y="270.8" width="24.1" height="24.1" fill="#767676"/>
<rect x="414.8" y="294.6" width="24.1" height="24.1" fill="#7e7e7e"/>
<rect x="414.8" y="318.3" width="24.1" height="24.1" fill="#848484"/>
<rect x="414.8" y="342.1" width="24.1" height="24.1" fill="#868686"/>
<rect x="414.8" y="365.8" width="24.1" height="24.1" fill="#898989"/>
<rect x="414.8" y="389.6" width="24.1" height="24.1" fill="#8c8c8c"/>
<rect x="414.8" y="413.3" width="24.1" height="24.1" fill="#8e8e8e"/>
<rect x="414.8" y="437.1" width="24.1" height="24.1" fill="#909090"/>
<rect x="414.8" y="460.8" width="24.1" height="24.1" fill="#929292"/>
<rect x="414.8" y="484.6" width="24.1" height="24.1" fill="#929292"/>
<rect x="414.8" y="508.3" width="24.1" height="24.0" fill="#909090"/>
<rect x="414.8" y="532.0" width="24.1" height="24.1" fill="#8f8f8f"/>
<rect x="414.8" y="555.8" width="24.1" height="24.1" fill="#8d8d8d"/>
<rect x="414.8" y="579.5" width="24.1" height="24.1" fill="#898989"/>
<rect x="414.8" y="603.3" width="24.1" height="24.1" fill="#888888"/>
<rect x="414.8" y="627.0" width="24.1" height="24.1" fill="#888888"/>
<rect x="414.8" y="650.8" width="24.1" height="24.1" fill="#888888"/>
<rect x="414.8" y="674.5" width="24.1" height="24.1" fill="#888888"/>
<rect x="414.8" y="698.3" width="24.1" height="24.1" fill="#888888"/>
<rect x="414.8" y="722.0" width="24.1" height="69.0" fill="#878787"/>
<rect x="438.5" y="130.8" width="24.1" height="69.0" fill="#616161"/>
<rect x="438.5" y="199.6" width="24.1" height="24.1" fill="#626262"/>
<rect x="438.5" y="223.3" width="24.1" height="24.1" fill="#656565"/>
<rect x="438.5" y="247.1" width="24.1" height="24.1" fill="#6a6a6a"/>
<rect x="438.5" y="270.8" width="24.1" height="24.1" fill="#727272"/>
<rect x="438.5" y="294.6" width="24.1" height="24.1" fill="#797979"/>
<rect x="438.5" y="318.3" width="24.1" height="24.1" fill="#7e7e7e"/>
<rect x="438.5" y="342.1" width="24.1" height="24.1" fill="#808080"/>
<rect x="438.5" y="365.8" width="24.1" height="24.1" fill="#838383"/>
<rect x="438.5" y="389.6" width="24.1" height="24.1" fill="#858585"/>
<rect x="438.5" y="413.3" width="24.1" height="24.1" fill="#888888"/>
<rect x="438.5" y="437.1" width="24.1" height="24.1" fill="#8a8a8a"/>
<rect x="438.5" y="460.8" width="24.1" height="24.1" fill="#8b8b8b"/>
<rect x="438.5" y="484.6" width="24.1" height="24.1" fill="#8b8b8b"/>
<rect x="438.5" y="508.3" width="24.1" height="24.0" fill="#898989"/>
<rect x="438.5" y="532.0" width="24.1" height="24.1" fill="#878787"/>
<rect x="438.5" y="555.8" width="24.1" height="24.1" fill="#858585"/>
<rect x="438.5" y="579.5" width="24.1" height="24.1" fill="#818181"/>
<rect x="438.5" y="603.3" width="24.1" height="24.1" fill="#808080"/>
<rect x="438.5" y="627.0" width="24.1" height="24.1" fill="#808080"/>
<rect x="438.5" y="650.8" width="24.1" height="24.1" fill="#818181"/>
<rect x="438.5" y="674.5" width="24.1" height="24.1" fill="#818181"/>
<rect x="438.5" y="698.3" width="24.1" height="24.1" fill="#838383"/>
<rect x="438.5" y="722.0" width="24.1" height="69.0" fill="#838383"/>
<rect x="462.2" y="130.8" width="24.1" height="69.0" fill="#606060"/>
<rect x="462.2" y="199.6" width="24.1" height="24.1" fill="#616161"/>
<rect x="462.2" y="223.3" width="24.1" height="24.1" fill="#646464"/>
<rect x="462.2" y="247.1" width="24.1" height="24.1" fill="#686868"/>
<rect x="462.2" y="270.8" width="24.1" height="24.1" fill="#6d6d6d"/>
<rect x="462.2" y="294.6" width="24.1" height="24.1" fill="#737373"/>
<rect x="462.2" y="318.3" width="24.1" height="24.1" fill="#777777"/>
<rect x="462.2" y="342.1" width="24.1" height="24.1" fill="#7a7a7a"/>
<rect x="462.2" y="365.8" width="24.1" height="24.1" fill="#7c7c7c"/>
<rect x="462.2" y="389.6" width="24.1" height="24.1" fill="#7f7f7f"/>
<rect x="462.2" y="413.3" width="24.1" height="24.1" fill="#818181"/>
<rect x="462.2" y="437.1" width="24.1" height="24.1" fill="#838383"/>
<rect x="462.2" y="460.8" width="24.1" height="24.1" fill="#838383"/>
<rect x="462.2" y="484.6" width="24.1" height="24.1" fill="#828282"/>
<rect x="462.2" y="508.3" width="24.1" height="24.0" fill="#808080"/>
<rect x="462.2" y="532.0" width="24.1" height="24.1" fill="#7e7e7e"/>
<rect x="462.2" y="555.8" width="24.1" height="24.1" fill="#7c7c7c"/>
<rect x="462.2" y="579.5" width="24.1" height="24.1" fill="#7b7b7b"/>
<rect x="462.2" y="603.3" width="24.1" height="24.1" fill="#7b7b7b"/>
<rect x="462.2" y="627.0" width="24.1" height="24.1" fill="#7c7c7c"/>
<rect x="462.2" y="650.8" width="24.1" height="24.1" fill="#7d7d7d"/>
<rect x="462.2" y="674.5" width="24.1" height="24.1" fill="#7f7f7f"/>
<rect x="462.2" y="698.3" width="24.1" height="24.1" fill="#828282"/>
<rect x="462.2" y="722.0" width="24.1" height="69.0" fill="#828282"/>
<rect x="486.0" y="130.8" width="24.1" height="69.0" fill="#5f5f5f"/>
<rect x="486.0" y="199.6" width="24.1" height="24.1" fill="#606060"/>
<rect x="486.0" y="223.3" width="24.1" height="24.1" fill="#636363"/>
<rect x="486.0" y="247.1" width="24.1" height="24.1" fill="#666666"/>
<rect x="486.0" y="270.8" width="24.1" height="24.1" fill="#6b6b6b"/>
<rect x="486.0" y="294.6" width="24.1" height="24.1" fill="#6f6f6f"/>
<rect x="486.0" y="318.3" width="24.1" height="24.1" fill="#727272"/>
<rect x="486.0" y="342.1" width="24.1" height="24.1" fill="#747474"/>
<rect x="486.0" y="365.8" width="24.1" height="24.1" fill="#767676"/>
<rect x="486.0" y="389.6" width="24.1" height="24.1" fill="#777777"/>
<rect x="486.0" y="413.3" width="24.1" height="24.1" fill="#797979"/>
<rect x="486.0" y="437.1" width="24.1" height="24.1" fill="#7a7a7a"/>
<rect x="486.0" y="460.8" width="24.1" height="24.1" fill="#7b7b7b"/>
<rect x="486.0" y="484.6" width="24.1" height="24.1" fill="#7b7b7b"/>
<rect x="486.0" y="508.3" width="24.1" height="24.0" fill="#797979"/>
<rect x="486.0" y="532.0" width="24.1" height="24.1" fill="#787878"/>
<rect x="486.0" y="555.8" width="24.1" height="24.1" fill="#777777"/>
<rect x="486.0" y="579.5" width="24.1" height="24.1" fill="#787878"/>
<rect x="486.0" y="603.3" width="24.1" height="24.1" fill="#797979"/>
<rect x="486.0" y="627.0" width="24.1" height="24.1" fill="#7b7b7b"/>
<rect x="486.0" y="650.8" width="24.1" height="24.1" fill="#7c7c7c"/>
<rect x="486.0" y="674.5" width="24.1" height="24.1" fill="#7e7e7e"/>
<rect x="486.0" y="698.3" width="24.1" height="24.1" fill="#818181"/>
<rect x="486.0" y="722.0" width="24.1" height="69.0" fill="#818181"/>
<rect x="509.8" y="130.8" width="24.1" height="69.0" fill="#5f5f5f"/>
<rect x="509.8" y="199.6" width="24.1" height="24.1" fill="#606060"/>
<rect x="509.8" y="223.3" width="24.1" height="24.1" fill="#636363"/>
<rect x="509.8" y="247.1" width="24.1" height="24.1" fill="#666666"/>
<rect x="509.8" y="270.8" width="24.1" height="24.1" fill="#6a6a6a"/>
<rect x="509.8" y="294.6" width="24.1" height="24.1" fill="#6d6d6d"/>
<rect x="509.8" y="318.3" width="24.1" height="24.1" fill="#6f6f6f"/>
<rect x="509.8" y="342.1" width="24.1" height="24.1" fill="#6f6f6f"/>
<rect x="509.8" y="365.8" width="24.1" height="24.1" fill="#6f6f6f"/>
<rect x="509.8" y="389.6" width="24.1" height="24.1" fill="#707070"/>
<rect x="509.8" y="413.3" width="24.1" height="24.1" fill="#717171"/>
<rect x="509.8" y="437.1" width="24.1" height="24.1" fill="#727272"/>
<rect x="509.8" y="460.8" width="24.1" height="24.1" fill="#737373"/>
<rect x="509.8" y="484.6" width="24.1" height="24.1" fill="#757575"/>
<rect x="509.8" y="508.3" width="24.1" height="24.0" fill="#767676"/>
<rect x="509.8" y="532.0" width="24.1" height="24.1" fill="#767676"/>
<rect x="509.8" y="555.8" width="24.1" height="24.1" fill="#777777"/>
<rect x="509.8" y="579.5" width="24.1" height="24.1" fill="#797979"/>
<rect x="509.8" y="603.3" width="24.1" height="24.1" fill="#7a7a7a"/>
<rect x="509.8" y="627.0" width="24.1" height="24.1" fill="#7b7b7b"/>
<rect x="509.8" y="650.8" width="24.1" height="24.1" fill="#7c7c7c"/>
<rect x="509.8" y="674.5" width="24.1" height="24.1" fill="#7d7d7d"/>
<rect x="509.8" y="698.3" width="24.1" height="24.1" fill="#808080"/>
<rect x="509.8" y="722.0" width="24.1" height="69.0" fill="#808080"/>
<rect x="533.5" y="130.8" width="24.1" height="69.0" fill="#4d4d4d"/>
<rect x="533.5" y="199.6" width="24.1" height="24.1" fill="#4f4f4f"/>
<rect x="533.5" y="223.3" width="24.1" height="24.1" fill="#505050"/>
<rect x="533.5" y="247.1" width="24.1" height="24.1" fill="#535353"/>
<rect x="533.5" y="270.8" width="24.1" height="24.1" fill="#565656"/>
<rect x="533.5" y="294.6" width="24.1" height="24.1" fill="#595959"/>
<rect x="533.5" y="318.3" width="24.1" height="24.1" fill="#5b5b5b"/>
<rect x="533.5" y="342.1" width="24.1" height="24.1" fill="#5c5c5c"/>
<rect x="533.5" y="365.8" width="24.1" height="24.1" fill="#5d5d5d"/>
<rect x="533.5" y="389.6" width="24.1" height="24.1" fill="#5e5e5e"/>
<rect x="533.5" y="413.3" width="24.1" height="24.1" fill="#5f5f5f"/>
<rect x="533.5" y="437.1" width="24.1" height="24.1" fill="#616161"/>
<rect x="533.5" y="460.8" width="24.1" height="24.1" fill="#646464"/>
<rect x="533.5" y="484.6" width="24.1" height="24.1" fill="#696969"/>
<rect x="533.5" y="508.3" width="24.1" height="24.0" fill="#6b6b6b"/>
<rect x="533.5" y="532.0" width="24.1" height="24.1" fill="#6d6d6d"/>
<rect x="533.5" y="555.8" width="24.1" height="24.1" fill="#6f6f6f"/>
<rect x="533.5" y="579.5" width="24.1" height="24.1" fill="#717171"/>
<rect x="533.5" y="603.3" width="24.1" height="24.1" fill="#727272"/>
<rect x="533.5" y="627.0" width="24.1" height="24.1" fill="#727272"/>
<rect x="533.5" y="650.8" width="24.1" height="24.1" fill="#727272"/>
<rect x="533.5" y="674.5" width="24.1" height="24.1" fill="#737373"/>
<rect x="533.5" y="698.3" width="24.1" height="24.1" fill="#737373"/>
<rect x="533.5" y="722.0" width="24.1" height="69.0" fill="#737373"/>
<rect x="557.2" y="130.8" width="24.1" height="69.0" fill="#424242"/>
<rect x="557.2" y="199.6" width="24.1" height="24.1" fill="#424242"/>
<rect x="557.2" y="223.3" width="24.1" height="24.1" fill="#434343"/>
<rect x="557.2" y="247.1" width="24.1" height="24.1" fill="#444444"/>
<rect x="557.2" y="270.8" width="24.1" height="24.1" fill="#474747"/>
<rect x="557.2" y="294.6" width="24.1" height="24.1" fill="#4b4b4b"/>
<rect x="557.2" y="318.3" width="24.1" height="24.1" fill="#4e4e4e"/>
<rect x="557.2" y="342.1" width="24.1" height="24.1" fill="#4f4f4f"/>
<rect x="557.2" y="365.8" width="24.1" height="24.1" fill="#515151"/>
<rect x="557.2" y="389.6" width="24.1" height="24.1" fill="#525252"/>
<rect x="557.2" y="413.3" width="24.1" height="24.1" fill="#535353"/>
<rect x="557.2" y="437.1" width="24.1" height="24.1" fill="#535353"/>
<rect x="557.2" y="460.8" width="24.1" height="24.1" fill="#565656"/>
<rect x="557.2" y="484.6" width="24.1" height="24.1" fill="#5a5a5a"/>
<rect x="557.2" y="508.3" width="24.1" height="24.0" fill="#5c5c5c"/>
<rect x="557.2" y="532.0" width="24.1" height="24.1" fill="#5e5e5e"/>
<rect x="557.2" y="555.8" width="24.1" height="24.1" fill="#606060"/>
<rect x="557.2" y="579.5" width="24.1" height="24.1" fill="#606060"/>
<rect x="557.2" y="603.3" width="24.1" height="24.1" fill="#606060"/>
<rect x="557.2" y="627.0" width="24.1" height="24.1" fill="#606060"/>
<rect x="557.2" y="650.8" width="24.1" height="24.1" fill="#5f5f5f"/>
<rect x="557.2" y="674.5" width="24.1" height="24.1" fill="#5f5f5f"/>
<rect x="557.2" y="698.3" width="24.1" height="24.1" fill="#5f5f5f"/>
<rect x="557.2" y="722.0" width="24.1" height="69.0" fill="#5f5f5f"/>
<rect x="581.0" y="130.8" width="24.1" height="69.0" fill="#3f3f3f"/>
<rect x="581.0" y="199.6" width="24.1" height="24.1" fill="#3f3f3f"/>
<rect x="581.0" y="223.3" width="24.1" height="24.1" fill="#3f3f3f"/>
<rect x="581.0" y="247.1" width="24.1" height="24.1" fill="#3f3f3f"/>
<rect x="581.0" y="270.8" width="24.1" height="24.1" fill="#424242"/>
<rect x="581.0" y="294.6" width="24.1" height="24.1" fill="#464646"/>
<rect x="581.0" y="318.3" width="24.1" height="24.1" fill="#484848"/>
<rect x="581.0" y="342.1" width="24.1" height="24.1" fill="#4a4a4a"/>
<rect x="581.0" y="365.8" width="24.1" height="24.1" fill="#4c4c4c"/>
<rect x="581.0" y="389.6" width="24.1" height="24.1" fill="#4c4c4c"/>
<rect x="581.0" y="413.3" width="24.1" height="24.1" fill="#4c4c4c"/>
<rect x="581.0" y="437.1" width="24.1" height="24.1" fill="#4b4b4b"/>
<rect x="581.0" y="460.8" width="24.1" height="24.1" fill="#4c4c4c"/>
<rect x="581.0" y="484.6" width="24.1" height="24.1" fill="#4d4d4d"/>
<rect x="581.0" y="508.3" width="24.1" height="24.0" fill="#515151"/>
<rect x="581.0" y="532.0" width="24.1" height="24.1" fill="#545454"/>
<rect x="581.0" y="555.8" width="24.1" height="24.1" fill="#575757"/>
<rect x="581.0" y="579.5" width="24.1" height="24.1" fill="#575757"/>
<rect x="581.0" y="603.3" width="24.1" height="24.1" fill="#565656"/>
<rect x="581.0" y="627.0" width="24.1" height="24.1" fill="#555555"/>
<rect x="581.0" y="650.8" width="24.1" height="24.1" fill="#545454"/>
<rect x="581.0" y="674.5" width="24.1" height="24.1" fill="#535353"/>
<rect x="581.0" y="698.3" width="24.1" height="24.1" fill="#535353"/>
<rect x="581.0" y="722.0" width="24.1" height="69.0" fill="#535353"/>
<rect x="604.8" y="130.8" width="24.1" height="69.0" fill="#3e3e3e"/>
<rect x="604.8" y="199.6" width="24.1" height="24.1" fill="#3e3e3e"/>
<rect x="604.8" y="223.3" width="24.1" height="24.1" fill="#3e3e3e"/>
<rect x="604.8" y="247.1" width="24.1" height="24.1" fill="#3e3e3e"/>
<rect x="604.8" y="270.8" width="24.1" height="24.1" fill="#404040"/>
<rect x="604.8" y="294.6" width="24.1" height="24.1" fill="#424242"/>
<rect x="604.8" y="318.3" width="24.1" height="24.1" fill="#434343"/>
<rect x="604.8" y="342.1" width="24.1" height="24.1" fill="#454545"/>
<rect x="604.8" y="365.8" width="24.1" height="24.1" fill="#474747"/>
<rect x="604.8" y="389.6" width="24.1" height="24.1" fill="#474747"/>
<rect x="604.8" y="413.3" width="24.1" height="24.1" fill="#464646"/>
<rect x="604.8" y="437.1" width="24.1" height="24.1" fill="#444444"/>
<rect x="604.8" y="460.8" width="24.1" height="24.1" fill="#434343"/>
<rect x="604.8" y="484.6" width="24.1" height="24.1" fill="#424242"/>
<rect x="604.8" y="508.3" width="24.1" height="24.0" fill="#474747"/>
<rect x="604.8" y="532.0" width="24.1" height="24.1" fill="#4d4d4d"/>
<rect x="604.8" y="555.8" width="24.1" height="24.1" fill="#525252"/>
<rect x="604.8" y="579.5" width="24.1" height="24.1" fill="#525252"/>
<rect x="604.8" y="603.3" width="24.1" height="24.1" fill="#515151"/>
<rect x="604.8" y="627.0" width="24.1" height="24.1" fill="#505050"/>
<rect x="604.8" y="650.8" width="24.1" height="24.1" fill="#4e4e4e"/>
<rect x="604.8" y="674.5" width="24.1" height="24.1" fill="#4d4d4d"/>
<rect x="604.8" y="698.3" width="24.1" height="24.1" fill="#4d4d4d"/>
<rect x="604.8" y="722.0" width="24.1" height="69.0" fill="#4d4d4d"/>
<rect x="628.5" y="130.8" width="24.1" height="69.0" fill="#444444"/>
<rect x="628.5" y="199.6" width="24.1" height="24.1" fill="#444444"/>
<rect x="628.5" y="223.3" width="24.1" height="24.1" fill="#454545"/>
<rect x="628.5" y="247.1" width="24.1" height="24.1" fill="#464646"/>
<rect x="628.5" y="270.8" width="24.1" height="24.1" fill="#474747"/>
<rect x="628.5" y="294.6" width="24.1" height="24.1" fill="#484848"/>
<rect x="628.5" y="318.3" width="24.1" height="24.1" fill="#494949"/>
<rect x="628.5" y="342.1" width="24.1" height="24.1" fill="#4a4a4a"/>
<rect x="628.5" y="365.8" width="24.1" height="24.1" fill="#4b4b4b"/>
<rect x="628.5" y="389.6" width="24.1" height="24.1" fill="#4b4b4b"/>
<rect x="628.5" y="413.3" width="24.1" height="24.1" fill="#4b4b4b"/>
<rect x="628.5" y="437.1" width="24.1" height="24.1" fill="#4a4a4a"/>
<rect x="628.5" y="460.8" width="24.1" height="24.1" fill="#4a4a4a"/>
<rect x="628.5" y="484.6" width="24.1" height="24.1" fill="#4a4a4a"/>
<rect x="628.5" y="508.3" width="24.1" height="24.0" fill="#4d4d4d"/>
<rect x="628.5" y="532.0" width="24.1" height="24.1" fill="#525252"/>
<rect x="628.5" y="555.8" width="24.1" height="24.1" fill="#555555"/>
<rect x="628.5" y="579.5" width="24.1" height="24.1" fill="#555555"/>
<rect x="628.5" y="603.3" width="24.1" height="24.1" fill="#545454"/>
<rect x="628.5" y="627.0" width="24.1" height="24.1" fill="#525252"/>
<rect x="628.5" y="650.8" width="24.1" height="24.1" fill="#505050"/>
<rect x="628.5" y="674.5" width="24.1" height="24.1" fill="#4e4e4e"/>
<rect x="628.5" y="698.3" width="24.1" height="24.1" fill="#4d4d4d"/>
<rect x="628.5" y="722.0" width="24.1" height="69.0" fill="#4d4d4d"/>
<rect x="652.2" y="130.8" width="69.0" height="69.0" fill="#474747"/>
<rect x="652.2" y="199.6" width="69.0" height="24.1" fill="#484848"/>
<rect x="652.2" y="223.3" width="69.0" height="24.1" fill="#494949"/>
<rect x="652.2" y="247.1" width="69.0" height="24.1" fill="#494949"/>
<rect x="652.2" y="270.8" width="69.0" height="24.1" fill="#4b4b4b"/>
<rect x="652.2" y="294.6" width="69.0" height="24.1" fill="#4d4d4d"/>
<rect x="652.2" y="318.3" width="69.0" height="24.1" fill="#4d4d4d"/>
<rect x="652.2" y="342.1" width="69.0" height="24.1" fill="#4d4d4d"/>
<rect x="652.2" y="365.8" width="69.0" height="24.1" fill="#4d4d4d"/>
<rect x="652.2" y="389.6" width="69.0" height="24.1" fill="#4e4e4e"/>
<rect x="652.2" y="413.3" width="69.0" height="24.1" fill="#505050"/>
<rect x="652.2" y="437.1" width="69.0" height="24.1" fill="#525252"/>
<rect x="652.2" y="460.8" width="69.0" height="24.1" fill="#545454"/>
<rect x="652.2" y="484.6" width="69.0" height="24.1" fill="#565656"/>
<rect x="652.2" y="508.3" width="69.0" height="24.0" fill="#565656"/>
<rect x="652.2" y="532.0" width="69.0" height="24.1" fill="#565656"/>
<rect x="652.2" y="555.8" width="69.0" height="24.1" fill="#565656"/>
<rect x="652.2" y="579.5" width="69.0" height="24.1" fill="#565656"/>
<rect x="652.2" y="603.3" width="69.0" height="24.1" fill="#555555"/>
<rect x="652.2" y="627.0" width="69.0" height="24.1" fill="#535353"/>
<rect x="652.2" y="650.8" width="69.0" height="24.1" fill="#505050"/>
<rect x="652.2" y="674.5" width="69.0" height="24.1" fill="#4e4e4e"/>
<rect x="652.2" y="698.3" width="69.0" height="24.1" fill="#4e4e4e"/>
<rect x="652.2" y="722.0" width="69.0" height="69.0" fill="#4d4d4d"/>
</g></g>
<rect x="101.0" y="170.8" width="580.0" height="19" fill="#2b2b2b" fill-opacity="0.92" filter="url(#b2)"/>
<rect x="106.0" y="175.8" width="70" height="70" fill="url(#gTL)"/>
<rect x="596.0" y="175.8" width="80" height="80" fill="url(#gTR)"/>
<path d="M150 207H640" fill="none" stroke="#4a4a4a" stroke-opacity="0.8" stroke-width="13" filter="url(#b2)"/>
<path d="M125 250V224Q125 195 154 194H391" fill="none" stroke="#999999" stroke-opacity="0.7" stroke-width="5.5" filter="url(#b2)"/>
<path d="M125 250V580" fill="none" stroke="#adadad" stroke-opacity="0.22" stroke-width="5" filter="url(#b2)"/>
<path d="M391 194H520L632 196Q656 198 661 218" fill="none" stroke="#808080" stroke-opacity="0.7" stroke-width="5.5" filter="url(#b2)"/>
<path d="M661 218Q662 222 662 230V420" fill="none" stroke="#808080" stroke-opacity="0.35" stroke-width="5.5" filter="url(#b2)"/>
<path d="M125 560V690Q127 716 146 719" fill="none" stroke="#fff" stroke-opacity="0.3" stroke-width="2.2" filter="url(#b2)"/>
<rect x="106.0" y="718.5" width="285.0" height="27.5" fill="url(#gBandL)"/>
<rect x="106.0" y="718.5" width="285.0" height="15.5" fill="url(#gBandL)"/>
<rect x="391.0" y="718.5" width="285.0" height="15.5" fill="url(#gBandR)"/>
<path d="M141.2 719V746M177.0 719V746M212.8 719V746M248.6 719V746M284.4 719V746M320.2 719V746M356.0 719V746M391.8 719V746M427.6 719V746M463.4 719V746M499.2 719V746M535.0 719V746M570.8 719V746M606.6 719V746M642.4 719V746" stroke="#000" stroke-opacity="0.3" stroke-width="1.4" fill="none"/>
<path d="M125.5 580V700Q127 716 144 719.5" fill="none" stroke="#fff" stroke-opacity="0.45" stroke-width="2.4"/>
<rect x="672" y="175.8" width="4.0" height="570.2" fill="#000"/>
</g>
<rect x="672.3" y="175.8" width="3.7000000000000455" height="570.2" fill="#0a0000"/>
<path d="M120 216.5H391M107 385.5H391M107 410.5H391M300 528.5H560" stroke="#fffbe0" stroke-opacity="0.5" stroke-width="1" fill="none"/>
<path d="M107 374.5H300M107 397.5H250" stroke="#fffbe0" stroke-opacity="0.3" stroke-width="1" fill="none"/>
<path d="M260.5 607V745" stroke="#fffbe0" stroke-opacity="0.8" stroke-width="1" fill="none"/>
<circle cx="203.4" cy="192.4" r="2.9" fill="#ffd050" fill-opacity="0.5"/><circle cx="203.4" cy="192.4" r="1.6" fill="#fff"/>
<circle cx="223.4" cy="189" r="2.7" fill="#ffd050" fill-opacity="0.5"/><circle cx="223.4" cy="189" r="1.4" fill="#fff"/>
<circle cx="141.4" cy="227.9" r="3.0" fill="#ffd050" fill-opacity="0.5"/><circle cx="141.4" cy="227.9" r="1.7" fill="#fff"/>
<circle cx="200.7" cy="232.8" r="4.0" fill="#ffd050" fill-opacity="0.5"/><circle cx="200.7" cy="232.8" r="2.7" fill="#fff"/>
<circle cx="330" cy="234.1" r="3.4" fill="#ffd050" fill-opacity="0.5"/><circle cx="330" cy="234.1" r="2.1" fill="#fff"/>
<circle cx="297.2" cy="259.7" r="3.4" fill="#ffd050" fill-opacity="0.5"/><circle cx="297.2" cy="259.7" r="2.1" fill="#fff"/>
<circle cx="298.3" cy="275.2" r="3.0" fill="#ffd050" fill-opacity="0.5"/><circle cx="298.3" cy="275.2" r="1.7" fill="#fff"/>
<circle cx="226.9" cy="320" r="4.2" fill="#ffd050" fill-opacity="0.5"/><circle cx="226.9" cy="320" r="2.9" fill="#fff"/>
<circle cx="239.7" cy="367.6" r="4.2" fill="#ffd050" fill-opacity="0.5"/><circle cx="239.7" cy="367.6" r="2.9" fill="#fff"/>
<circle cx="279.3" cy="371" r="2.5" fill="#ffd050" fill-opacity="0.5"/><circle cx="279.3" cy="371" r="1.2" fill="#fff"/>
<circle cx="144.1" cy="390.7" r="5.1" fill="#ffd050" fill-opacity="0.5"/><circle cx="144.1" cy="390.7" r="3.8" fill="#fff"/>
<circle cx="113.1" cy="396.9" r="3.6" fill="#ffd050" fill-opacity="0.5"/><circle cx="113.1" cy="396.9" r="2.3" fill="#fff"/>
<circle cx="250.7" cy="397.6" r="3.6" fill="#ffd050" fill-opacity="0.5"/><circle cx="250.7" cy="397.6" r="2.3" fill="#fff"/>
<circle cx="350" cy="381" r="4.0" fill="#ffd050" fill-opacity="0.5"/><circle cx="350" cy="381" r="2.7" fill="#fff"/>
<circle cx="312.8" cy="394.8" r="2.7" fill="#ffd050" fill-opacity="0.5"/><circle cx="312.8" cy="394.8" r="1.4" fill="#fff"/>
<circle cx="275.9" cy="453.4" r="2.7" fill="#ffd050" fill-opacity="0.5"/><circle cx="275.9" cy="453.4" r="1.4" fill="#fff"/>
<circle cx="231" cy="461.4" r="3.1" fill="#ffd050" fill-opacity="0.5"/><circle cx="231" cy="461.4" r="1.8" fill="#fff"/>
<circle cx="163" cy="248.6" r="2.2" fill="#ffd050" fill-opacity="0.5"/><circle cx="163" cy="248.6" r="0.9" fill="#fff"/>
<circle cx="206.9" cy="428.6" r="2.5" fill="#ffd050" fill-opacity="0.5"/><circle cx="206.9" cy="428.6" r="1.2" fill="#fff"/>
<circle cx="521.2" cy="257.2" r="5.3" fill="#ffd050" fill-opacity="0.5"/><circle cx="521.2" cy="257.2" r="4.0" fill="#fff"/>
<circle cx="400.5" cy="287.9" r="3.3" fill="#ffd050" fill-opacity="0.5"/><circle cx="400.5" cy="287.9" r="2.0" fill="#fff"/>
<circle cx="421.2" cy="336.6" r="4.4" fill="#ffd050" fill-opacity="0.5"/><circle cx="421.2" cy="336.6" r="3.1" fill="#fff"/>
<circle cx="555.7" cy="303.8" r="3.1" fill="#ffd050" fill-opacity="0.5"/><circle cx="555.7" cy="303.8" r="1.8" fill="#fff"/>
<circle cx="639.5" cy="241.4" r="3.3" fill="#ffd050" fill-opacity="0.5"/><circle cx="639.5" cy="241.4" r="2.0" fill="#fff"/>
<circle cx="591.9" cy="232" r="2.2" fill="#ffd050" fill-opacity="0.5"/><circle cx="591.9" cy="232" r="0.9" fill="#fff"/>
<circle cx="485" cy="345.2" r="2.3" fill="#ffd050" fill-opacity="0.5"/><circle cx="485" cy="345.2" r="1.0" fill="#fff"/>
<circle cx="532.6" cy="390" r="2.6" fill="#ffd050" fill-opacity="0.5"/><circle cx="532.6" cy="390" r="1.3" fill="#fff"/>
<circle cx="486.7" cy="405.5" r="3.3" fill="#ffd050" fill-opacity="0.5"/><circle cx="486.7" cy="405.5" r="2.0" fill="#fff"/>
<circle cx="494.7" cy="397.6" r="2.6" fill="#ffd050" fill-opacity="0.5"/><circle cx="494.7" cy="397.6" r="1.3" fill="#fff"/>
<circle cx="524.7" cy="426.9" r="2.2" fill="#ffd050" fill-opacity="0.5"/><circle cx="524.7" cy="426.9" r="0.9" fill="#fff"/>
<circle cx="414.3" cy="447.6" r="2.9" fill="#ffd050" fill-opacity="0.5"/><circle cx="414.3" cy="447.6" r="1.6" fill="#fff"/>
<circle cx="612.6" cy="371.7" r="2.3" fill="#ffd050" fill-opacity="0.5"/><circle cx="612.6" cy="371.7" r="1.0" fill="#fff"/>
<circle cx="207.6" cy="629.8" r="3.6" fill="#ffd050" fill-opacity="0.5"/><circle cx="207.6" cy="629.8" r="2.3" fill="#fff"/>
<circle cx="223.4" cy="648.1" r="5.1" fill="#ffd050" fill-opacity="0.5"/><circle cx="223.4" cy="648.1" r="3.8" fill="#fff"/>
<circle cx="331" cy="642.9" r="3.8" fill="#ffd050" fill-opacity="0.5"/><circle cx="331" cy="642.9" r="2.5" fill="#fff"/>
<circle cx="325.9" cy="680.9" r="6.0" fill="#ffd050" fill-opacity="0.5"/><circle cx="325.9" cy="680.9" r="4.7" fill="#fff"/>
<circle cx="216.6" cy="704" r="3.3" fill="#ffd050" fill-opacity="0.5"/><circle cx="216.6" cy="704" r="2.0" fill="#fff"/>
<circle cx="175.9" cy="713.6" r="3.5" fill="#ffd050" fill-opacity="0.5"/><circle cx="175.9" cy="713.6" r="2.2" fill="#fff"/>
<circle cx="243" cy="718.8" r="3.1" fill="#ffd050" fill-opacity="0.5"/><circle cx="243" cy="718.8" r="1.8" fill="#fff"/>
<circle cx="341.4" cy="738.4" r="5.4" fill="#ffd050" fill-opacity="0.5"/><circle cx="341.4" cy="738.4" r="4.1" fill="#fff"/>
<circle cx="320" cy="518.1" r="2.9" fill="#ffd050" fill-opacity="0.5"/><circle cx="320" cy="518.1" r="1.6" fill="#fff"/>
<circle cx="271.4" cy="482.6" r="2.4" fill="#ffd050" fill-opacity="0.5"/><circle cx="271.4" cy="482.6" r="1.1" fill="#fff"/>
<circle cx="255.2" cy="499.8" r="2.4" fill="#ffd050" fill-opacity="0.5"/><circle cx="255.2" cy="499.8" r="1.1" fill="#fff"/>
<circle cx="113.1" cy="513.6" r="2.7" fill="#ffd050" fill-opacity="0.5"/><circle cx="113.1" cy="513.6" r="1.4" fill="#fff"/>
<circle cx="372.4" cy="486" r="2.6" fill="#ffd050" fill-opacity="0.5"/><circle cx="372.4" cy="486" r="1.3" fill="#fff"/>
<circle cx="351.7" cy="534.3" r="2.4" fill="#ffd050" fill-opacity="0.5"/><circle cx="351.7" cy="534.3" r="1.1" fill="#fff"/>
<circle cx="554" cy="514.3" r="3.5" fill="#ffd050" fill-opacity="0.5"/><circle cx="554" cy="514.3" r="2.2" fill="#fff"/>
<circle cx="667.8" cy="528.4" r="4.4" fill="#ffd050" fill-opacity="0.5"/><circle cx="667.8" cy="528.4" r="3.1" fill="#fff"/>
<circle cx="664.3" cy="538.8" r="4.5" fill="#ffd050" fill-opacity="0.5"/><circle cx="664.3" cy="538.8" r="3.2" fill="#fff"/>
<circle cx="613.6" cy="552.6" r="3.3" fill="#ffd050" fill-opacity="0.5"/><circle cx="613.6" cy="552.6" r="2.0" fill="#fff"/>
<circle cx="584.3" cy="562.9" r="3.5" fill="#ffd050" fill-opacity="0.5"/><circle cx="584.3" cy="562.9" r="2.2" fill="#fff"/>
<circle cx="487.8" cy="541.9" r="2.9" fill="#ffd050" fill-opacity="0.5"/><circle cx="487.8" cy="541.9" r="1.6" fill="#fff"/>
<circle cx="471.2" cy="587.8" r="2.8" fill="#ffd050" fill-opacity="0.5"/><circle cx="471.2" cy="587.8" r="1.5" fill="#fff"/>
<circle cx="414.3" cy="606.7" r="3.5" fill="#ffd050" fill-opacity="0.5"/><circle cx="414.3" cy="606.7" r="2.2" fill="#fff"/>
<circle cx="530.5" cy="660.9" r="2.7" fill="#ffd050" fill-opacity="0.5"/><circle cx="530.5" cy="660.9" r="1.4" fill="#fff"/>
<circle cx="534" cy="696.4" r="5.4" fill="#ffd050" fill-opacity="0.5"/><circle cx="534" cy="696.4" r="4.1" fill="#fff"/>
<circle cx="413.3" cy="707.8" r="4.2" fill="#ffd050" fill-opacity="0.5"/><circle cx="413.3" cy="707.8" r="2.9" fill="#fff"/>
<circle cx="609.8" cy="674.7" r="2.6" fill="#ffd050" fill-opacity="0.5"/><circle cx="609.8" cy="674.7" r="1.3" fill="#fff"/>
<circle cx="609.1" cy="712.9" r="2.6" fill="#ffd050" fill-opacity="0.5"/><circle cx="609.1" cy="712.9" r="1.3" fill="#fff"/>
<circle cx="647" cy="720.5" r="2.5" fill="#ffd050" fill-opacity="0.5"/><circle cx="647" cy="720.5" r="1.2" fill="#fff"/>
<circle cx="648.5" cy="727.5" r="2.4" fill="#ffd050" fill-opacity="0.5"/><circle cx="648.5" cy="727.5" r="1.1" fill="#fff"/>
<circle cx="438.4" cy="580.9" r="2.0" fill="#ffd040" fill-opacity="0.6"/>
<circle cx="527.4" cy="579.8" r="2.2" fill="#ffd040" fill-opacity="0.6"/>
<circle cx="162" cy="434" r="1.6" fill="#ffd040" fill-opacity="0.6"/>
<ellipse cx="348.3" cy="483.6" rx="1.7" ry="3.4" fill="#0b0000" transform="rotate(25 348.3 483.6)"/>
<ellipse cx="315.5" cy="301.7" rx="1.8" ry="1.8" fill="#0b0000" transform="rotate(0 315.5 301.7)"/>
<ellipse cx="447" cy="540.2" rx="2.0" ry="2.0" fill="#0b0000" transform="rotate(0 447 540.2)"/>
<ellipse cx="653.3" cy="280.3" rx="2.8" ry="2.8" fill="#0b0000" transform="rotate(0 653.3 280.3)"/>
<ellipse cx="659" cy="302.8" rx="1.5" ry="1.5" fill="#0b0000" transform="rotate(0 659 302.8)"/>
<ellipse cx="220.7" cy="386.6" rx="1.6" ry="1.6" fill="#0b0000" transform="rotate(0 220.7 386.6)"/>
<ellipse cx="331" cy="388.3" rx="2.8" ry="1.4" fill="#0b0000" transform="rotate(-15 331 388.3)"/>
<ellipse cx="456.4" cy="591.9" rx="1.0" ry="1.0" fill="#0b0000" transform="rotate(0 456.4 591.9)"/>
<ellipse cx="669" cy="642" rx="2.2" ry="2.2" fill="#0b0000" transform="rotate(0 669 642)"/>
<ellipse cx="633" cy="538" rx="1.4" ry="2.0" fill="#0b0000" transform="rotate(0 633 538)"/>
<path d="M391.5 170V752M100 461.5H682" stroke="#0000ff" stroke-width="1" fill="none"/>
<rect x="106.0" y="175.8" width="570.0" height="570.2" fill="none" stroke="#000" stroke-width="1.8"/>
<path d="M106.14 746.0v7M106.0 745.86h-7M175.72 746.0v7M106.0 676.28h-7M245.30 746.0v7M106.0 606.70h-7M314.88 746.0v7M106.0 537.12h-7M384.46 746.0v7M106.0 467.54h-7M454.04 746.0v7M106.0 397.96h-7M523.62 746.0v7M106.0 328.38h-7M593.20 746.0v7M106.0 258.80h-7M662.78 746.0v7M106.0 189.22h-7" stroke="#000" stroke-width="1.8" fill="none"/>
<text x="106.14" y="768.8" font-size="9.72" text-anchor="middle" >0</text>
<text x="91.2" y="749.46" font-size="9.72" text-anchor="end" >0</text>
<text x="175.72" y="768.8" font-size="9.72" text-anchor="middle" >250</text>
<text x="91.2" y="679.88" font-size="9.72" text-anchor="end" >250</text>
<text x="245.30" y="768.8" font-size="9.72" text-anchor="middle" >500</text>
<text x="91.2" y="610.30" font-size="9.72" text-anchor="end" >500</text>
<text x="314.88" y="768.8" font-size="9.72" text-anchor="middle" >750</text>
<text x="91.2" y="540.72" font-size="9.72" text-anchor="end" >750</text>
<text x="384.46" y="768.8" font-size="9.72" text-anchor="middle" >1000</text>
<text x="91.2" y="471.14" font-size="9.72" text-anchor="end" >1000</text>
<text x="454.04" y="768.8" font-size="9.72" text-anchor="middle" >1250</text>
<text x="91.2" y="401.56" font-size="9.72" text-anchor="end" >1250</text>
<text x="523.62" y="768.8" font-size="9.72" text-anchor="middle" >1500</text>
<text x="91.2" y="331.98" font-size="9.72" text-anchor="end" >1500</text>
<text x="593.20" y="768.8" font-size="9.72" text-anchor="middle" >1750</text>
<text x="91.2" y="262.40" font-size="9.72" text-anchor="end" >1750</text>
<text x="662.78" y="768.8" font-size="9.72" text-anchor="middle" >2000</text>
<text x="91.2" y="192.82" font-size="9.72" text-anchor="end" >2000</text>
<text x="391.3" y="786.6" font-size="10.4" text-anchor="middle" >X</text>
<text font-size="10.4" text-anchor="middle" transform="translate(51.6 460.6) rotate(-90)">Y</text>
<defs><linearGradient id="cb" x1="0" y1="0" x2="0" y2="1"><stop offset="0.0000" stop-color="rgb(255,255,255)"/><stop offset="0.0312" stop-color="rgb(255,255,224)"/><stop offset="0.0625" stop-color="rgb(255,255,192)"/><stop offset="0.0938" stop-color="rgb(255,255,161)"/><stop offset="0.1250" stop-color="rgb(255,255,129)"/><stop offset="0.1562" stop-color="rgb(255,255,98)"/><stop offset="0.1875" stop-color="rgb(255,255,67)"/><stop offset="0.2188" stop-color="rgb(255,255,35)"/><stop offset="0.2500" stop-color="rgb(255,255,4)"/><stop offset="0.2812" stop-color="rgb(255,237,0)"/><stop offset="0.3125" stop-color="rgb(255,216,0)"/><stop offset="0.3438" stop-color="rgb(255,195,0)"/><stop offset="0.3750" stop-color="rgb(255,174,0)"/><stop offset="0.4062" stop-color="rgb(255,153,0)"/><stop offset="0.4375" stop-color="rgb(255,132,0)"/><stop offset="0.4688" stop-color="rgb(255,111,0)"/><stop offset="0.5000" stop-color="rgb(255,90,0)"/><stop offset="0.5312" stop-color="rgb(255,69,0)"/><stop offset="0.5625" stop-color="rgb(255,48,0)"/><stop offset="0.5938" stop-color="rgb(255,28,0)"/><stop offset="0.6250" stop-color="rgb(255,7,0)"/><stop offset="0.6562" stop-color="rgb(241,0,0)"/><stop offset="0.6875" stop-color="rgb(220,0,0)"/><stop offset="0.7188" stop-color="rgb(199,0,0)"/><stop offset="0.7500" stop-color="rgb(178,0,0)"/><stop offset="0.7812" stop-color="rgb(157,0,0)"/><stop offset="0.8125" stop-color="rgb(136,0,0)"/><stop offset="0.8438" stop-color="rgb(115,0,0)"/><stop offset="0.8750" stop-color="rgb(94,0,0)"/><stop offset="0.9062" stop-color="rgb(73,0,0)"/><stop offset="0.9375" stop-color="rgb(52,0,0)"/><stop offset="0.9688" stop-color="rgb(32,0,0)"/><stop offset="1.0000" stop-color="rgb(11,0,0)"/></linearGradient></defs>
<rect x="712.0" y="112.9" width="35.0" height="696.0" fill="url(#cb)" stroke="#000" stroke-width="1.8"/>
<text x="762" y="739.35" font-size="9.72" text-anchor="start" >60</text>
<text x="762" y="638.04" font-size="9.72" text-anchor="start" >65</text>
<text x="762" y="536.73" font-size="9.72" text-anchor="start" >70</text>
<text x="762" y="435.42" font-size="9.72" text-anchor="start" >75</text>
<text x="762" y="334.11" font-size="9.72" text-anchor="start" >80</text>
<text x="762" y="232.80" font-size="9.72" text-anchor="start" >85</text>
<text x="762" y="131.49" font-size="9.72" text-anchor="start" >90</text>
<path d="M747.0 735.75h7M747.0 634.44h7M747.0 533.13h7M747.0 431.82h7M747.0 330.51h7M747.0 229.20h7M747.0 127.89h7" stroke="#000" stroke-width="1.8" fill="none"/>
<clipPath id="c1"><rect x="911.0" y="112.9" width="274.20000000000005" height="120.0"/></clipPath>
<path d="M913.7 240V225.7H919.2V221.7H924.7V217.6H930.2V210.7H935.6V193.5H941.1V162.6H946.6V162.6H952.1V178.7H957.6V181.8H963.1V181.8H968.5V180.6H974.0V180.6H979.5V180.6H985.0V180.0H990.5V179.0H996.0V180.0H1001.4V175.5H1006.9V168.9H1012.4V157.6H1017.9V146.8H1023.4V135.6H1028.9V128.0H1034.3V121.9H1039.8V119.2H1045.3V119.2H1050.8V121.9H1056.3V128.0H1061.8V136.9H1067.3V148.8H1072.7V159.7H1078.2V171.5H1083.7V181.9H1089.2V187.9H1094.7V191.9H1100.2V193.8H1105.6V195.9H1111.1V197.9H1116.6V199.0H1122.1V199.9H1127.6V199.9H1133.1V201.9H1138.5V201.9H1144.0V202.8H1149.5V203.8H1155.0V203.8H1160.5V204.9H1166.0V204.9H1171.4V204.9H1176.9V205.9H1182.4V166.6H1190" fill="none" stroke="#0000ff" stroke-width="1.9" stroke-linejoin="miter" clip-path="url(#c1)"/>
<rect x="911.0" y="112.9" width="274.20000000000005" height="120.0" fill="none" stroke="#000" stroke-width="1.8"/>
<text x="950.40" y="255.7" font-size="9.72" text-anchor="middle" >0</text>
<text x="1016.50" y="255.7" font-size="9.72" text-anchor="middle" >50</text>
<text x="1082.70" y="255.7" font-size="9.72" text-anchor="middle" >100</text>
<text x="1148.90" y="255.7" font-size="9.72" text-anchor="middle" >150</text>
<text x="896.2" y="221.60" font-size="9.72" text-anchor="end" >2</text>
<text x="896.2" y="196.40" font-size="9.72" text-anchor="end" >3</text>
<text x="896.2" y="171.00" font-size="9.72" text-anchor="end" >4</text>
<text x="896.2" y="145.80" font-size="9.72" text-anchor="end" >5</text>
<text x="896.2" y="120.60" font-size="9.72" text-anchor="end" >6</text>
<path d="M950.40 232.9v7M1016.50 232.9v7M1082.70 232.9v7M1148.90 232.9v7M911.0 218.00h-7M911.0 192.80h-7M911.0 167.40h-7M911.0 142.20h-7M911.0 117.00h-7" stroke="#000" stroke-width="1.8" fill="none"/>
<text x="1048.1" y="273.5" font-size="10.4" text-anchor="middle" >counts</text>
<text font-size="10.4" text-anchor="middle" transform="translate(878.0 173.8) rotate(-90)">log frequency</text>
<text font-size="10.4" text-anchor="middle" transform="translate(1194.3 175.2) rotate(90)">histogram (detail)</text>
<clipPath id="c2"><rect x="911.0" y="284.8" width="274.20000000000005" height="120.30000000000001"/></clipPath>
<path d="M912.9 404.6H919.0V397.1H924.6V290.9H930.3V356.0H935.9V360.9H941.5V362.0H947.1V364.1H952.8V366.7H958.4V368.1H964.0V370.9H969.7V372.0H975.3V374.9H980.9V375.8H986.6V379.1H992.2V382.9H997.8V382.1H1003.5V383.9H1009.1V387.9H1014.7V395.0H1020.3V391.1H1026.0V392.9H1031.6V389.8H1037.2V397.1H1042.9V397.1H1048.5V404.6H1190" fill="none" stroke="#0000ff" stroke-width="1.9" stroke-linejoin="miter" clip-path="url(#c2)"/>
<rect x="911.0" y="284.8" width="274.20000000000005" height="120.30000000000001" fill="none" stroke="#000" stroke-width="1.8"/>
<text x="929.00" y="427.9" font-size="9.72" text-anchor="middle" >0</text>
<text x="1003.60" y="427.9" font-size="9.72" text-anchor="middle" >20000</text>
<text x="1078.20" y="427.9" font-size="9.72" text-anchor="middle" >40000</text>
<text x="1152.80" y="427.9" font-size="9.72" text-anchor="middle" >60000</text>
<text x="896.2" y="408.70" font-size="9.72" text-anchor="end" >0</text>
<text x="896.2" y="374.40" font-size="9.72" text-anchor="end" >2</text>
<text x="896.2" y="340.00" font-size="9.72" text-anchor="end" >4</text>
<text x="896.2" y="305.70" font-size="9.72" text-anchor="end" >6</text>
<path d="M929.00 405.1v7M966.30 405.1v7M1003.60 405.1v7M1040.90 405.1v7M1078.20 405.1v7M1115.50 405.1v7M1152.80 405.1v7M911.0 405.10h-7M911.0 370.80h-7M911.0 336.40h-7M911.0 302.10h-7" stroke="#000" stroke-width="1.8" fill="none"/>
<text x="1048.1" y="445.7" font-size="10.4" text-anchor="middle" >counts</text>
<text font-size="10.4" text-anchor="middle" transform="translate(878.0 345.9) rotate(-90)">log frequency</text>
<text font-size="10.4" text-anchor="middle" transform="translate(1194.3 348.6) rotate(90)">histogram (full)</text>
<clipPath id="c3"><rect x="911.0" y="516.9" width="274.20000000000005" height="119.89999999999998"/></clipPath>
<path d="M911.9 621.3L912.0 579.3L912.2 579.5L912.3 573.3L912.4 573.8L912.6 567.9L912.7 576.7L912.8 575.6L913.0 575.4L913.1 574.5L913.2 570.4L913.4 573.5L913.5 579.2L913.6 574.8L913.8 577.0L913.9 573.5L914.0 571.3L914.2 578.9L914.3 574.6L914.4 572.9L914.5 572.2L914.7 577.1L914.8 571.8L914.9 574.2L915.1 615.4L915.2 615.4L915.3 615.4L915.5 615.4L915.6 615.4L915.7 575.6L915.9 573.2L916.0 573.5L916.1 577.8L916.3 575.6L916.4 570.8L916.5 570.5L916.7 573.6L916.8 571.5L916.9 576.7L917.1 567.3L917.2 571.1L917.3 578.2L917.5 573.6L917.6 571.6L917.7 574.6L917.9 572.9L918.0 574.0L918.1 569.4L918.3 570.3L918.4 575.2L918.5 573.4L918.7 572.3L918.8 574.2L918.9 571.9L919.1 571.4L919.2 566.1L919.3 575.7L919.5 573.4L919.6 573.8L919.7 568.7L919.9 576.6L920.0 575.9L920.1 571.9L920.2 573.1L920.4 576.4L920.5 576.1L920.6 571.4L920.8 573.9L920.9 572.7L921.0 571.2L921.2 579.0L921.3 568.5L921.4 575.9L921.6 578.6L921.7 566.5L921.8 573.3L922.0 569.2L922.1 573.5L922.2 579.9L922.4 561.9L922.5 574.8L922.6 581.7L922.8 572.1L922.9 581.7L923.0 568.4L923.2 578.4L923.3 571.2L923.4 577.7L923.6 578.4L923.7 576.6L923.8 566.9L924.0 574.5L924.1 574.6L924.2 578.8L924.4 569.1L924.5 571.2L924.6 576.7L924.8 573.9L924.9 580.2L925.0 579.4L925.1 575.9L925.3 569.1L925.4 569.9L925.5 577.1L925.7 576.6L925.8 569.6L925.9 571.5L926.1 581.5L926.2 576.9L926.3 575.7L926.5 570.6L926.6 580.0L926.7 574.5L926.9 572.1L927.0 573.4L927.1 570.6L927.3 576.9L927.4 568.0L927.5 573.4L927.7 573.8L927.8 575.4L927.9 578.6L928.1 572.3L928.2 573.9L928.3 572.9L928.5 576.5L928.6 576.8L928.7 577.0L928.9 571.0L929.0 582.5L929.1 576.4L929.3 573.8L929.4 574.7L929.5 576.3L929.7 575.6L929.8 578.2L929.9 579.1L930.1 570.3L930.2 569.0L930.3 576.5L930.4 579.6L930.6 579.7L930.7 569.6L930.8 578.5L931.0 575.6L931.1 576.1L931.2 577.7L931.4 578.5L931.5 564.5L931.6 575.4L931.8 577.5L931.9 567.2L932.0 570.9L932.2 572.3L932.3 575.0L932.4 574.1L932.6 573.5L932.7 576.2L932.8 572.9L933.0 572.6L933.1 571.3L933.2 578.7L933.4 572.7L933.5 574.6L933.6 575.6L933.8 568.6L933.9 571.6L934.0 577.9L934.2 569.9L934.3 580.4L934.4 569.9L934.6 575.0L934.7 578.2L934.8 575.1L935.0 570.0L935.1 575.0L935.2 577.9L935.4 575.7L935.5 577.7L935.6 575.0L935.8 574.6L935.9 570.2L936.0 571.1L936.1 581.1L936.3 572.4L936.4 569.6L936.5 574.0L936.7 574.9L936.8 575.3L936.9 577.0L937.1 384.9L937.2 396.7L937.3 443.7L937.5 571.8L937.6 576.7L937.7 571.6L937.9 572.7L938.0 569.4L938.1 571.3L938.3 578.0L938.4 574.5L938.5 580.6L938.7 577.3L938.8 566.8L938.9 572.7L939.1 575.4L939.2 574.2L939.3 572.5L939.5 573.7L939.6 575.9L939.7 571.8L939.9 573.9L940.0 572.4L940.1 574.5L940.3 579.5L940.4 574.2L940.5 573.4L940.7 573.5L940.8 575.9L940.9 575.0L941.0 568.4L941.2 583.2L941.3 566.1L941.4 570.8L941.6 576.0L941.7 570.6L941.8 574.6L942.0 574.5L942.1 572.5L942.2 570.6L942.4 573.4L942.5 572.1L942.6 569.2L942.8 578.1L942.9 576.6L943.0 576.7L943.2 567.8L943.3 574.8L943.4 574.3L943.6 580.2L943.7 568.3L943.8 578.5L944.0 573.8L944.1 577.7L944.2 576.3L944.4 570.8L944.5 577.3L944.6 577.9L944.8 575.7L944.9 576.9L945.0 577.5L945.2 574.8L945.3 575.9L945.4 579.8L945.6 578.4L945.7 577.9L945.8 571.9L946.0 573.4L946.1 574.2L946.2 566.4L946.4 569.6L946.5 575.0L946.6 573.6L946.7 575.4L946.9 566.3L947.0 571.8L947.1 572.1L947.3 570.5L947.4 570.6L947.5 575.3L947.7 576.0L947.8 571.9L947.9 575.3L948.1 568.6L948.2 574.1L948.3 573.1L948.5 579.9L948.6 569.3L948.7 565.6L948.9 574.7L949.0 577.7L949.1 572.4L949.3 582.3L949.4 575.3L949.5 567.7L949.7 575.0L949.8 576.9L949.9 576.8L950.1 575.9L950.2 574.4L950.3 576.7L950.5 573.3L950.6 573.3L950.7 578.4L950.9 574.3L951.0 576.7L951.1 573.0L951.3 578.9L951.4 575.9L951.5 578.3L951.6 574.0L951.8 576.4L951.9 567.8L952.0 577.7L952.2 574.6L952.3 570.4L952.4 575.4L952.6 574.4L952.7 578.8L952.8 575.6L953.0 573.3L953.1 570.9L953.2 572.5L953.4 573.3L953.5 573.8L953.6 576.5L953.8 572.8L953.9 577.2L954.0 576.1L954.2 570.1L954.3 577.1L954.4 572.6L954.6 572.8L954.7 573.4L954.8 575.3L955.0 576.8L955.1 572.9L955.2 569.0L955.4 574.9L955.5 579.4L955.6 577.6L955.8 569.7L955.9 575.2L956.0 578.5L956.2 570.8L956.3 576.0L956.4 575.5L956.6 570.8L956.7 574.0L956.8 570.7L956.9 576.8L957.1 571.9L957.2 572.8L957.3 578.3L957.5 571.4L957.6 568.7L957.7 569.9L957.9 573.5L958.0 569.1L958.1 575.1L958.3 580.0L958.4 575.9L958.5 574.7L958.7 581.6L958.8 570.5L958.9 569.5L959.1 573.0L959.2 568.2L959.3 576.6L959.5 572.1L959.6 578.4L959.7 573.9L959.9 570.9L960.0 575.9L960.1 570.2L960.3 579.1L960.4 569.2L960.5 575.4L960.7 572.9L960.8 577.5L960.9 574.7L961.1 584.9L961.2 573.0L961.3 570.5L961.5 571.2L961.6 573.0L961.7 573.7L961.9 576.2L962.0 580.7L962.1 577.9L962.2 573.1L962.4 571.8L962.5 576.1L962.6 575.5L962.8 571.3L962.9 568.8L963.0 572.4L963.2 577.7L963.3 571.3L963.4 575.7L963.6 576.5L963.7 573.8L963.8 572.9L964.0 577.3L964.1 575.7L964.2 563.4L964.4 570.1L964.5 573.8L964.6 575.1L964.8 578.7L964.9 575.2L965.0 571.6L965.2 581.3L965.3 582.5L965.4 578.1L965.6 569.1L965.7 574.7L965.8 568.5L966.0 582.7L966.1 572.3L966.2 576.1L966.4 568.2L966.5 568.5L966.6 570.5L966.8 576.1L966.9 574.4L967.0 574.6L967.2 572.7L967.3 574.8L967.4 577.3L967.5 577.1L967.7 571.6L967.8 574.3L967.9 574.5L968.1 573.7L968.2 569.5L968.3 567.7L968.5 574.4L968.6 574.9L968.7 570.7L968.9 575.9L969.0 571.0L969.1 572.3L969.3 568.6L969.4 579.2L969.5 576.2L969.7 572.4L969.8 573.0L969.9 574.6L970.1 576.2L970.2 575.3L970.3 574.9L970.5 571.5L970.6 571.5L970.7 443.7L970.9 326.1L971.0 384.9L971.1 490.7L971.3 537.8L971.4 561.3L971.5 572.7L971.7 579.0L971.8 575.6L971.9 571.2L972.1 577.0L972.2 571.1L972.3 575.6L972.5 575.3L972.6 577.2L972.7 575.0L972.9 576.4L973.0 584.1L973.1 572.8L973.2 576.0L973.4 573.5L973.5 572.6L973.6 575.0L973.8 577.0L973.9 575.8L974.0 573.6L974.2 570.4L974.3 576.5L974.4 574.7L974.6 566.3L974.7 575.5L974.8 575.1L975.0 571.9L975.1 575.6L975.2 572.3L975.4 569.9L975.5 569.6L975.6 564.6L975.8 575.9L975.9 569.1L976.0 579.3L976.2 577.5L976.3 575.9L976.4 573.6L976.6 572.0L976.7 570.2L976.8 576.5L977.0 569.6L977.1 568.5L977.2 566.9L977.4 578.2L977.5 571.4L977.6 573.9L977.8 578.1L977.9 571.8L978.0 576.8L978.1 570.4L978.3 576.4L978.4 571.4L978.5 575.7L978.7 569.4L978.8 577.3L978.9 575.6L979.1 569.5L979.2 577.9L979.3 572.6L979.5 575.4L979.6 578.0L979.7 576.0L979.9 572.4L980.0 568.9L980.1 575.1L980.3 573.1L980.4 576.3L980.5 572.7L980.7 574.9L980.8 589.7L980.9 576.0L981.1 572.2L981.2 570.6L981.3 570.6L981.5 569.8L981.6 576.9L981.7 573.1L981.9 573.0L982.0 580.0L982.1 570.5L982.3 578.2L982.4 569.2L982.5 579.8L982.7 575.4L982.8 578.3L982.9 564.8L983.1 577.0L983.2 570.3L983.3 582.2L983.4 571.7L983.6 576.2L983.7 575.8L983.8 572.9L984.0 575.0L984.1 576.6L984.2 574.8L984.4 571.3L984.5 570.8L984.6 571.1L984.8 572.9L984.9 571.7L985.0 575.3L985.2 573.6L985.3 573.6L985.4 574.2L985.6 578.0L985.7 571.8L985.8 573.1L986.0 571.9L986.1 573.5L986.2 575.9L986.4 565.0L986.5 576.3L986.6 572.7L986.8 581.6L986.9 571.1L987.0 573.4L987.2 568.2L987.3 574.6L987.4 573.7L987.6 575.7L987.7 576.5L987.8 574.8L988.0 574.2L988.1 569.5L988.2 574.1L988.4 571.6L988.5 580.8L988.6 571.6L988.8 578.9L988.9 578.0L989.0 573.4L989.1 574.6L989.3 576.9L989.4 577.5L989.5 570.4L989.7 572.7L989.8 574.4L989.9 580.1L990.1 576.4L990.2 577.4L990.3 579.1L990.5 573.8L990.6 575.5L990.7 570.3L990.9 572.2L991.0 574.4L991.1 570.1L991.3 569.6L991.4 570.3L991.5 573.9L991.7 577.7L991.8 575.3L991.9 576.3L992.1 579.0L992.2 574.5L992.3 572.3L992.5 571.8L992.6 572.7L992.7 571.8L992.9 575.1L993.0 568.2L993.1 574.2L993.3 568.0L993.4 579.3L993.5 571.7L993.7 574.9L993.8 576.3L993.9 572.7L994.0 577.5L994.2 573.5L994.3 578.0L994.4 573.3L994.6 578.4L994.7 573.6L994.8 575.4L995.0 565.5L995.1 574.2L995.2 578.2L995.4 573.7L995.5 572.4L995.6 573.7L995.8 575.9L995.9 564.9L996.0 565.6L996.2 571.9L996.3 576.8L996.4 575.5L996.6 576.6L996.7 572.4L996.8 570.1L997.0 577.4L997.1 571.9L997.2 577.0L997.4 575.0L997.5 569.2L997.6 578.6L997.8 571.3L997.9 570.8L998.0 577.4L998.2 570.5L998.3 574.1L998.4 578.1L998.6 574.3L998.7 579.2L998.8 577.1L999.0 575.2L999.1 578.4L999.2 569.7L999.4 571.1L999.5 571.3L999.6 575.3L999.7 568.7L999.9 572.3L1000.0 568.3L1000.1 579.9L1000.3 574.8L1000.4 576.8L1000.5 573.7L1000.7 567.6L1000.8 578.0L1000.9 571.7L1001.1 575.6L1001.2 575.8L1001.3 568.8L1001.5 571.1L1001.6 573.4L1001.7 571.2L1001.9 580.9L1002.0 578.2L1002.1 567.8L1002.3 573.8L1002.4 572.8L1002.5 575.1L1002.7 575.0L1002.8 582.9L1002.9 571.3L1003.1 575.3L1003.2 576.7L1003.3 569.4L1003.5 573.5L1003.6 573.3L1003.7 569.9L1003.9 569.7L1004.0 574.1L1004.1 568.4L1004.3 571.0L1004.4 573.4L1004.5 576.8L1004.6 573.3L1004.8 576.4L1004.9 573.4L1005.0 572.2L1005.2 573.2L1005.3 576.9L1005.4 576.2L1005.6 577.8L1005.7 576.3L1005.8 581.8L1006.0 567.7L1006.1 574.6L1006.2 571.7L1006.4 577.6L1006.5 576.8L1006.6 576.7L1006.8 578.8L1006.9 570.7L1007.0 576.4L1007.2 576.7L1007.3 572.7L1007.4 576.1L1007.6 569.2L1007.7 574.7L1007.8 574.5L1008.0 572.1L1008.1 575.6L1008.2 569.3L1008.4 576.4L1008.5 580.1L1008.6 574.6L1008.8 571.6L1008.9 575.1L1009.0 576.0L1009.2 572.6L1009.3 575.9L1009.4 573.1L1009.6 577.6L1009.7 572.9L1009.8 576.0L1010.0 570.8L1010.1 578.0L1010.2 575.9L1010.3 573.2L1010.5 573.7L1010.6 571.4L1010.7 572.0L1010.9 578.2L1011.0 576.1L1011.1 573.4L1011.3 576.8L1011.4 575.5L1011.5 572.2L1011.7 573.1L1011.8 574.0L1011.9 573.9L1012.1 571.1L1012.2 574.2L1012.3 570.7L1012.5 574.5L1012.6 578.5L1012.7 575.9L1012.9 573.0L1013.0 576.7L1013.1 574.3L1013.3 567.9L1013.4 567.6L1013.5 572.3L1013.7 575.6L1013.8 576.8L1013.9 570.7L1014.1 572.8L1014.2 578.3L1014.3 569.8L1014.5 570.7L1014.6 576.2L1014.7 577.5L1014.9 579.8L1015.0 581.0L1015.1 573.6L1015.2 574.7L1015.4 574.7L1015.5 575.0L1015.6 578.5L1015.8 577.0L1015.9 577.1L1016.0 577.1L1016.2 578.2L1016.3 573.9L1016.4 573.4L1016.6 573.5L1016.7 571.2L1016.8 574.1L1017.0 573.7L1017.1 567.2L1017.2 569.5L1017.4 572.2L1017.5 574.1L1017.6 577.1L1017.8 575.9L1017.9 580.5L1018.0 574.4L1018.2 571.2L1018.3 572.9L1018.4 573.6L1018.6 578.6L1018.7 578.5L1018.8 581.0L1019.0 576.5L1019.1 571.3L1019.2 566.5L1019.4 575.9L1019.5 574.5L1019.6 578.2L1019.8 577.8L1019.9 574.4L1020.0 570.6L1020.2 576.5L1020.3 573.3L1020.4 574.1L1020.5 575.7L1020.7 572.0L1020.8 578.8L1020.9 573.6L1021.1 574.3L1021.2 582.0L1021.3 568.9L1021.5 577.3L1021.6 572.3L1021.7 572.8L1021.9 571.3L1022.0 573.7L1022.1 574.3L1022.3 573.9L1022.4 571.9L1022.5 575.1L1022.7 574.1L1022.8 581.7L1022.9 567.8L1023.1 572.0L1023.2 568.5L1023.3 576.8L1023.5 566.5L1023.6 578.3L1023.7 578.7L1023.9 572.0L1024.0 578.5L1024.1 573.6L1024.3 577.5L1024.4 575.1L1024.5 585.1L1024.7 578.7L1024.8 576.6L1024.9 581.0L1025.1 573.9L1025.2 572.2L1025.3 575.4L1025.5 575.0L1025.6 577.3L1025.7 570.4L1025.8 572.3L1026.0 573.5L1026.1 574.2L1026.2 576.9L1026.4 578.0L1026.5 571.1L1026.6 573.4L1026.8 573.4L1026.9 576.3L1027.0 574.5L1027.2 573.2L1027.3 575.0L1027.4 576.9L1027.6 574.2L1027.7 576.7L1027.8 577.1L1028.0 576.1L1028.1 576.9L1028.2 575.0L1028.4 575.0L1028.5 572.2L1028.6 577.2L1028.8 570.2L1028.9 578.7L1029.0 576.9L1029.2 573.9L1029.3 569.9L1029.4 573.7L1029.6 571.7L1029.7 581.1L1029.8 572.6L1030.0 573.6L1030.1 575.3L1030.2 575.6L1030.4 573.7L1030.5 578.2L1030.6 573.7L1030.8 573.8L1030.9 572.6L1031.0 582.5L1031.2 581.2L1031.3 574.5L1031.4 574.5L1031.5 574.9L1031.7 572.9L1031.8 582.1L1031.9 581.8L1032.1 573.4L1032.2 576.9L1032.3 572.2L1032.5 571.8L1032.6 572.3L1032.7 574.4L1032.9 576.2L1033.0 572.3L1033.1 573.6L1033.3 575.8L1033.4 571.6L1033.5 585.1L1033.7 572.4L1033.8 573.1L1033.9 573.5L1034.1 576.6L1034.2 574.7L1034.3 581.3L1034.5 580.8L1034.6 573.5L1034.7 576.9L1034.9 574.9L1035.0 578.1L1035.1 578.1L1035.3 572.4L1035.4 574.2L1035.5 580.8L1035.7 573.7L1035.8 570.4L1035.9 572.8L1036.1 576.1L1036.2 568.2L1036.3 567.1L1036.5 576.7L1036.6 576.7L1036.7 569.3L1036.8 571.5L1037.0 575.6L1037.1 573.2L1037.2 572.9L1037.4 571.7L1037.5 577.2L1037.6 579.7L1037.8 570.6L1037.9 576.0L1038.0 578.0L1038.2 571.3L1038.3 576.4L1038.4 572.7L1038.6 573.4L1038.7 576.8L1038.8 574.0L1039.0 573.1L1039.1 573.2L1039.2 576.7L1039.4 570.0L1039.5 576.5L1039.6 576.2L1039.8 575.4L1039.9 574.8L1040.0 573.8L1040.2 575.4L1040.3 572.0L1040.4 575.9L1040.6 573.9L1040.7 575.7L1040.8 579.6L1041.0 581.1L1041.1 576.7L1041.2 580.3L1041.4 580.3L1041.5 570.1L1041.6 572.1L1041.8 577.6L1041.9 580.5L1042.0 575.7L1042.1 581.4L1042.3 572.1L1042.4 579.6L1042.5 576.7L1042.7 579.6L1042.8 572.2L1042.9 573.0L1043.1 573.2L1043.2 572.5L1043.3 572.7L1043.5 575.8L1043.6 580.6L1043.7 572.4L1043.9 581.4L1044.0 576.9L1044.1 568.3L1044.3 574.2L1044.4 573.1L1044.5 579.9L1044.7 580.7L1044.8 573.4L1044.9 576.1L1045.1 573.9L1045.2 577.0L1045.3 572.0L1045.5 574.0L1045.6 577.5L1045.7 573.8L1045.9 575.6L1046.0 578.3L1046.1 575.6L1046.3 578.8L1046.4 578.6L1046.5 571.7L1046.7 575.1L1046.8 578.8L1046.9 574.7L1047.0 575.8L1047.2 572.5L1047.3 571.3L1047.4 579.4L1047.6 574.2L1047.7 573.0L1047.8 575.8L1048.0 573.5L1048.1 580.2L1048.2 579.2L1048.4 576.4L1048.5 573.4L1048.6 576.1L1048.8 570.7L1048.9 568.9L1049.0 574.0L1049.2 580.1L1049.3 570.9L1049.4 569.8L1049.6 571.8L1049.7 576.5L1049.8 579.6L1050.0 580.7L1050.1 572.4L1050.2 580.5L1050.4 574.5L1050.5 577.0L1050.6 577.4L1050.8 571.2L1050.9 573.2L1051.0 580.7L1051.2 578.2L1051.3 576.4L1051.4 573.7L1051.6 572.9L1051.7 572.4L1051.8 565.8L1052.0 576.8L1052.1 580.2L1052.2 573.2L1052.3 581.4L1052.5 580.5L1052.6 573.8L1052.7 573.5L1052.9 568.3L1053.0 578.1L1053.1 575.4L1053.3 572.9L1053.4 582.3L1053.5 577.2L1053.7 574.1L1053.8 580.0L1053.9 582.2L1054.1 578.7L1054.2 575.2L1054.3 577.5L1054.5 576.3L1054.6 572.6L1054.7 574.1L1054.9 573.6L1055.0 574.9L1055.1 580.7L1055.3 573.1L1055.4 576.1L1055.5 576.9L1055.7 573.5L1055.8 575.4L1055.9 574.4L1056.1 578.8L1056.2 576.0L1056.3 577.6L1056.5 574.3L1056.6 574.1L1056.7 567.8L1056.9 579.2L1057.0 578.6L1057.1 572.6L1057.3 575.2L1057.4 575.8L1057.5 578.0L1057.7 571.1L1057.8 572.7L1057.9 571.3L1058.0 574.4L1058.2 574.4L1058.3 575.1L1058.4 580.2L1058.6 573.1L1058.7 573.6L1058.8 568.3L1059.0 567.0L1059.1 571.7L1059.2 567.1L1059.4 573.9L1059.5 573.8L1059.6 574.9L1059.8 576.5L1059.9 574.0L1060.0 576.2L1060.2 574.8L1060.3 575.2L1060.4 568.9L1060.6 579.6L1060.7 571.6L1060.8 568.8L1061.0 583.1L1061.1 573.6L1061.2 573.6L1061.4 582.3L1061.5 576.7L1061.6 576.0L1061.8 574.3L1061.9 567.4L1062.0 580.4L1062.2 572.3L1062.3 567.5L1062.4 583.3L1062.6 575.1L1062.7 571.8L1062.8 576.0L1063.0 581.1L1063.1 574.9L1063.2 578.7L1063.3 576.7L1063.5 572.0L1063.6 584.0L1063.7 571.3L1063.9 577.1L1064.0 577.1L1064.1 574.2L1064.3 573.4L1064.4 579.7L1064.5 576.1L1064.7 578.1L1064.8 578.9L1064.9 578.5L1065.1 572.1L1065.2 577.3L1065.3 572.1L1065.5 579.3L1065.6 570.8L1065.7 579.0L1065.9 579.5L1066.0 577.3L1066.1 572.6L1066.3 579.9L1066.4 572.4L1066.5 572.0L1066.7 583.0L1066.8 576.1L1066.9 578.3L1067.1 571.6L1067.2 571.8L1067.3 575.4L1067.5 571.8L1067.6 574.7L1067.7 574.5L1067.9 571.5L1068.0 574.9L1068.1 575.7L1068.2 578.3L1068.4 571.5L1068.5 579.5L1068.6 580.6L1068.8 577.2L1068.9 577.9L1069.0 576.7L1069.2 573.4L1069.3 581.8L1069.4 575.5L1069.6 571.3L1069.7 577.7L1069.8 577.9L1070.0 579.5L1070.1 574.3L1070.2 576.7L1070.4 578.4L1070.5 574.6L1070.6 576.8L1070.8 570.9L1070.9 578.2L1071.0 579.7L1071.2 576.4L1071.3 576.7L1071.4 574.2L1071.6 577.6L1071.7 573.3L1071.8 579.2L1072.0 577.8L1072.1 577.7L1072.2 581.8L1072.4 575.4L1072.5 576.3L1072.6 578.1L1072.8 572.2L1072.9 575.8L1073.0 577.7L1073.2 576.3L1073.3 575.2L1073.4 576.6L1073.5 570.9L1073.7 574.7L1073.8 573.5L1073.9 577.9L1074.1 581.3L1074.2 569.1L1074.3 573.9L1074.5 580.0L1074.6 574.7L1074.7 584.2L1074.9 580.2L1075.0 576.1L1075.1 572.9L1075.3 578.5L1075.4 577.1L1075.5 576.4L1075.7 571.8L1075.8 577.1L1075.9 575.6L1076.1 581.2L1076.2 576.4L1076.3 577.7L1076.5 568.1L1076.6 578.0L1076.7 565.9L1076.9 579.3L1077.0 574.2L1077.1 574.1L1077.3 581.0L1077.4 573.9L1077.5 571.5L1077.7 575.2L1077.8 577.4L1077.9 576.7L1078.1 578.4L1078.2 576.5L1078.3 581.5L1078.5 576.4L1078.6 574.7L1078.7 574.8L1078.8 580.5L1079.0 577.1L1079.1 577.2L1079.2 570.6L1079.4 579.4L1079.5 574.1L1079.6 579.5L1079.8 579.5L1079.9 580.8L1080.0 575.8L1080.2 582.3L1080.3 571.7L1080.4 581.2L1080.6 573.9L1080.7 578.4L1080.8 585.5L1081.0 581.7L1081.1 575.0L1081.2 586.6L1081.4 579.4L1081.5 573.4L1081.6 576.6L1081.8 578.9L1081.9 578.7L1082.0 574.5L1082.2 569.7L1082.3 574.2L1082.4 583.1L1082.6 578.5L1082.7 582.9L1082.8 577.2L1083.0 571.6L1083.1 575.2L1083.2 577.3L1083.4 578.4L1083.5 585.7L1083.6 581.2L1083.8 577.9L1083.9 573.1L1084.0 580.4L1084.2 578.9L1084.3 576.2L1084.4 587.9L1084.5 579.3L1084.7 580.8L1084.8 572.5L1084.9 579.2L1085.1 582.3L1085.2 577.8L1085.3 574.0L1085.5 581.0L1085.6 573.7L1085.7 571.7L1085.9 583.3L1086.0 576.3L1086.1 576.4L1086.3 577.8L1086.4 573.4L1086.5 574.6L1086.7 583.9L1086.8 578.5L1086.9 580.6L1087.1 580.6L1087.2 577.1L1087.3 582.0L1087.5 579.7L1087.6 576.8L1087.7 572.8L1087.9 579.7L1088.0 574.5L1088.1 573.1L1088.3 580.4L1088.4 578.4L1088.5 580.1L1088.7 577.3L1088.8 574.5L1088.9 572.6L1089.1 576.2L1089.2 582.3L1089.3 579.1L1089.5 584.0L1089.6 569.8L1089.7 576.4L1089.8 577.3L1090.0 576.7L1090.1 575.5L1090.2 579.7L1090.4 574.4L1090.5 580.1L1090.6 575.4L1090.8 578.1L1090.9 577.4L1091.0 578.3L1091.2 576.4L1091.3 581.2L1091.4 578.4L1091.6 581.9L1091.7 581.8L1091.8 581.2L1092.0 576.4L1092.1 582.5L1092.2 579.0L1092.4 578.1L1092.5 577.5L1092.6 576.9L1092.8 583.0L1092.9 573.8L1093.0 583.3L1093.2 578.5L1093.3 582.3L1093.4 570.5L1093.6 594.8L1093.7 594.8L1093.8 577.3L1094.0 581.5L1094.1 578.8L1094.2 577.1L1094.4 578.6L1094.5 576.5L1094.6 575.8L1094.8 586.3L1094.9 581.8L1095.0 582.5L1095.1 581.2L1095.3 574.4L1095.4 581.8L1095.5 581.8L1095.7 579.6L1095.8 576.3L1095.9 578.5L1096.1 573.4L1096.2 576.1L1096.3 580.3L1096.5 579.4L1096.6 576.6L1096.7 584.1L1096.9 572.7L1097.0 577.5L1097.1 576.8L1097.3 578.5L1097.4 580.1L1097.5 576.5L1097.7 582.2L1097.8 582.7L1097.9 582.2L1098.1 580.4L1098.2 579.5L1098.3 581.3L1098.5 578.9L1098.6 576.3L1098.7 577.0L1098.9 578.2L1099.0 576.1L1099.1 583.7L1099.3 581.6L1099.4 581.7L1099.5 575.4L1099.7 577.8L1099.8 578.5L1099.9 579.0L1100.0 580.3L1100.2 577.6L1100.3 577.6L1100.4 575.6L1100.6 581.8L1100.7 580.4L1100.8 573.2L1101.0 576.1L1101.1 586.1L1101.2 578.1L1101.4 579.1L1101.5 585.1L1101.6 578.2L1101.8 577.8L1101.9 577.1L1102.0 582.0L1102.2 576.9L1102.3 583.5L1102.4 577.4L1102.6 577.7L1102.7 578.1L1102.8 574.9L1103.0 583.0L1103.1 580.5L1103.2 583.2L1103.4 579.9L1103.5 581.5L1103.6 581.3L1103.8 576.2L1103.9 582.8L1104.0 578.1L1104.2 580.5L1104.3 583.7L1104.4 575.8L1104.6 580.5L1104.7 577.0L1104.8 582.3L1105.0 587.5L1105.1 576.2L1105.2 584.6L1105.3 580.3L1105.5 586.9L1105.6 572.6L1105.7 581.8L1105.9 573.1L1106.0 579.9L1106.1 577.6L1106.3 577.0L1106.4 579.6L1106.5 581.1L1106.7 582.0L1106.8 575.5L1106.9 573.4L1107.1 588.0L1107.2 580.7L1107.3 582.0L1107.5 590.0L1107.6 581.0L1107.7 582.4L1107.9 583.0L1108.0 587.1L1108.1 576.6L1108.3 583.8L1108.4 579.0L1108.5 582.3L1108.7 580.9L1108.8 584.6L1108.9 581.1L1109.1 578.1L1109.2 580.4L1109.3 585.9L1109.5 576.7L1109.6 581.4L1109.7 582.9L1109.9 578.1L1110.0 580.7L1110.1 580.0L1110.3 576.0L1110.4 575.1L1110.5 578.1L1110.7 585.8L1110.8 583.5L1110.9 575.4L1111.0 576.9L1111.2 583.5L1111.3 576.3L1111.4 581.6L1111.6 581.9L1111.7 581.7L1111.8 576.6L1112.0 579.0L1112.1 576.2L1112.2 578.2L1112.4 581.1L1112.5 582.1L1112.6 577.3L1112.8 580.1L1112.9 581.3L1113.0 581.6L1113.2 571.1L1113.3 582.8L1113.4 586.3L1113.6 581.3L1113.7 584.1L1113.8 584.3L1114.0 578.4L1114.1 576.9L1114.2 575.9L1114.4 581.5L1114.5 583.0L1114.6 575.1L1114.8 574.4L1114.9 581.1L1115.0 582.2L1115.2 572.1L1115.3 577.4L1115.4 579.7L1115.6 581.7L1115.7 587.4L1115.8 578.6L1116.0 575.4L1116.1 578.7L1116.2 577.9L1116.3 581.2L1116.5 572.4L1116.6 584.0L1116.7 581.3L1116.9 587.5L1117.0 582.0L1117.1 580.1L1117.3 578.3L1117.4 582.0L1117.5 577.2L1117.7 574.9L1117.8 584.8L1117.9 577.4L1118.1 578.9L1118.2 579.0L1118.3 585.1L1118.5 579.9L1118.6 575.8L1118.7 571.5L1118.9 581.4L1119.0 584.6L1119.1 585.7L1119.3 584.6L1119.4 582.1L1119.5 582.8L1119.7 582.0L1119.8 582.7L1119.9 578.4L1120.1 585.1L1120.2 581.7L1120.3 582.2L1120.5 577.7L1120.6 587.7L1120.7 578.6L1120.9 578.8L1121.0 577.7L1121.1 578.7L1121.2 577.7L1121.4 582.4L1121.5 581.0L1121.6 576.5L1121.8 575.1L1121.9 579.1L1122.0 579.4L1122.2 578.4L1122.3 580.6L1122.4 580.5L1122.6 580.5L1122.7 579.2L1122.8 576.8L1123.0 580.7L1123.1 581.7L1123.2 580.9L1123.4 581.6L1123.5 580.7L1123.6 574.0L1123.8 571.0L1123.9 574.4L1124.0 581.7L1124.2 579.2L1124.3 585.3L1124.4 583.8L1124.6 578.0L1124.7 585.8L1124.8 582.8L1125.0 579.5L1125.1 579.3L1125.2 581.6L1125.4 576.7L1125.5 581.3L1125.6 574.2L1125.8 580.2L1125.9 580.4L1126.0 579.2L1126.2 581.1L1126.3 584.7L1126.4 583.1L1126.5 579.1L1126.7 576.5L1126.8 578.8L1126.9 579.1L1127.1 580.5L1127.2 580.4L1127.3 581.8L1127.5 578.9L1127.6 577.7L1127.7 575.0L1127.9 579.9L1128.0 578.6L1128.1 574.1L1128.3 584.9L1128.4 581.9L1128.5 578.3L1128.7 579.8L1128.8 584.1L1128.9 583.1L1129.1 577.6L1129.2 582.5L1129.3 576.4L1129.5 582.9L1129.6 578.3L1129.7 588.0L1129.9 576.7L1130.0 581.8L1130.1 577.4L1130.3 586.2L1130.4 584.1L1130.5 580.0L1130.7 580.1L1130.8 581.5L1130.9 586.7L1131.1 582.9L1131.2 575.0L1131.3 583.7L1131.5 579.6L1131.6 581.0L1131.7 574.1L1131.8 572.5L1132.0 582.7L1132.1 578.6L1132.2 574.5L1132.4 586.9L1132.5 578.2L1132.6 574.9L1132.8 584.8L1132.9 581.3L1133.0 577.8L1133.2 586.0L1133.3 584.3L1133.4 581.0L1133.6 583.8L1133.7 577.2L1133.8 579.5L1134.0 583.4L1134.1 581.8L1134.2 582.8L1134.4 577.2L1134.5 577.9L1134.6 579.8L1134.8 576.7L1134.9 580.0L1135.0 583.2L1135.2 577.8L1135.3 575.8L1135.4 577.1L1135.6 584.0L1135.7 575.9L1135.8 576.9L1136.0 587.2L1136.1 585.0L1136.2 579.8L1136.4 577.9L1136.5 587.1L1136.6 584.4L1136.8 584.0L1136.9 584.2L1137.0 580.3L1137.2 582.7L1137.3 581.6L1137.4 581.1L1137.5 583.9L1137.7 580.0L1137.8 575.2L1137.9 581.1L1138.1 579.5L1138.2 573.3L1138.3 577.9L1138.5 584.1L1138.6 580.5L1138.7 443.7L1138.9 373.1L1139.0 502.5L1139.1 582.5L1139.3 584.7L1139.4 580.3L1139.5 574.0L1139.7 584.2L1139.8 580.9L1139.9 577.1L1140.1 587.4L1140.2 572.1L1140.3 578.9L1140.5 579.6L1140.6 578.4L1140.7 580.2L1140.9 578.6L1141.0 582.5L1141.1 575.3L1141.3 581.8L1141.4 580.3L1141.5 584.9L1141.7 582.3L1141.8 583.3L1141.9 578.3L1142.1 581.1L1142.2 573.0L1142.3 583.1L1142.5 578.6L1142.6 584.6L1142.7 577.1L1142.8 586.3L1143.0 581.0L1143.1 584.5L1143.2 585.4L1143.4 578.7L1143.5 583.8L1143.6 576.6L1143.8 581.4L1143.9 586.6L1144.0 585.4L1144.2 578.7L1144.3 576.7L1144.4 580.1L1144.6 579.6L1144.7 576.6L1144.8 580.5L1145.0 580.8L1145.1 580.7L1145.2 584.9L1145.4 575.4L1145.5 577.8L1145.6 575.6L1145.8 582.8L1145.9 573.7L1146.0 581.6L1146.2 575.1L1146.3 579.5L1146.4 582.4L1146.6 582.0L1146.7 587.1L1146.8 587.1L1147.0 578.3L1147.1 590.5L1147.2 580.2L1147.4 579.4L1147.5 576.2L1147.6 579.9L1147.8 577.2L1147.9 577.9L1148.0 582.7L1148.1 581.7L1148.3 577.3L1148.4 579.9L1148.5 576.6L1148.7 579.3L1148.8 583.8L1148.9 579.2L1149.1 576.5L1149.2 578.1L1149.3 578.7L1149.5 584.8L1149.6 579.4L1149.7 580.5L1149.9 573.6L1150.0 588.3L1150.1 583.8L1150.3 581.3L1150.4 575.1L1150.5 580.1L1150.7 580.2L1150.8 578.3L1150.9 578.6L1151.1 576.3L1151.2 583.1L1151.3 585.8L1151.5 576.8L1151.6 580.4L1151.7 580.4L1151.9 579.8L1152.0 575.2L1152.1 580.0L1152.3 574.2L1152.4 583.4L1152.5 573.7L1152.7 578.1L1152.8 574.3L1152.9 581.5L1153.0 580.0L1153.2 582.1L1153.3 582.7L1153.4 576.8L1153.6 576.5L1153.7 581.1L1153.8 578.9L1154.0 578.8L1154.1 574.3L1154.2 579.5L1154.4 574.3L1154.5 577.5L1154.6 579.7L1154.8 576.5L1154.9 574.9L1155.0 578.2L1155.2 576.0L1155.3 579.8L1155.4 578.2L1155.6 578.4L1155.7 573.7L1155.8 577.2L1156.0 576.0L1156.1 583.8L1156.2 571.2L1156.4 580.4L1156.5 575.6L1156.6 577.7L1156.8 579.1L1156.9 577.8L1157.0 575.9L1157.2 577.1L1157.3 582.6L1157.4 582.2L1157.6 575.2L1157.7 577.4L1157.8 577.6L1158.0 581.1L1158.1 574.2L1158.2 578.6L1158.3 573.6L1158.5 580.4L1158.6 581.5L1158.7 578.4L1158.9 579.9L1159.0 582.1L1159.1 572.4L1159.3 581.4L1159.4 576.5L1159.5 578.8L1159.7 578.5L1159.8 578.3L1159.9 577.0L1160.1 583.1L1160.2 579.8L1160.3 580.1L1160.5 582.5L1160.6 583.5L1160.7 579.2L1160.9 576.7L1161.0 574.9L1161.1 582.5L1161.3 572.8L1161.4 582.0L1161.5 577.8L1161.7 575.3L1161.8 588.7L1161.9 576.7L1162.1 572.2L1162.2 585.4L1162.3 575.9L1162.5 579.7L1162.6 582.3L1162.7 586.2L1162.9 579.6L1163.0 578.9L1163.1 584.0L1163.3 575.1L1163.4 582.0L1163.5 577.4L1163.7 581.6L1163.8 579.9L1163.9 576.7L1164.0 577.7L1164.2 574.1L1164.3 573.4L1164.4 580.4L1164.6 579.2L1164.7 582.9L1164.8 581.1L1165.0 577.4L1165.1 575.0L1165.2 580.9L1165.4 580.1L1165.5 585.4L1165.6 574.2L1165.8 577.8L1165.9 578.6L1166.0 578.3L1166.2 578.2L1166.3 584.5L1166.4 583.8L1166.6 581.0L1166.7 580.5L1166.8 575.1L1167.0 582.7L1167.1 574.3L1167.2 580.1L1167.4 579.5L1167.5 577.2L1167.6 578.8L1167.8 577.3L1167.9 578.8L1168.0 581.7L1168.2 575.7L1168.3 584.8L1168.4 574.4L1168.6 580.9L1168.7 582.3L1168.8 575.9L1169.0 575.3L1169.1 583.3L1169.2 581.6L1169.3 576.3L1169.5 583.9L1169.6 579.6L1169.7 583.3L1169.9 580.7L1170.0 586.0L1170.1 576.5L1170.3 583.0L1170.4 581.1L1170.5 578.9L1170.7 580.7L1170.8 578.6L1170.9 577.1L1171.1 576.9L1171.2 574.8L1171.3 584.1L1171.5 578.7L1171.6 580.3L1171.7 581.7L1171.9 574.6L1172.0 580.2L1172.1 580.2L1172.3 576.1L1172.4 579.9L1172.5 581.7L1172.7 591.1L1172.8 579.2L1172.9 579.0L1173.1 579.2L1173.2 584.2L1173.3 583.7L1173.5 583.6L1173.6 582.7L1173.7 581.1L1173.9 580.2L1174.0 588.1L1174.1 575.6L1174.2 583.0L1174.4 579.9L1174.5 577.3L1174.6 574.7L1174.8 578.2L1174.9 384.9L1175.0 326.1L1175.2 443.7L1175.3 581.9L1175.4 579.3L1175.6 578.7L1175.7 581.1L1175.8 585.8L1176.0 582.0L1176.1 575.4L1176.2 581.3L1176.4 579.2L1176.5 580.8L1176.6 580.5L1176.8 578.0L1176.9 584.3L1177.0 577.8L1177.2 586.3L1177.3 579.0L1177.4 575.7L1177.6 580.8L1177.7 581.0L1177.8 583.8L1178.0 578.4L1178.1 582.3L1178.2 584.0L1178.4 577.5L1178.5 588.3L1178.6 583.5L1178.8 579.6L1178.9 580.3L1179.0 580.4L1179.2 579.5L1179.3 579.9L1179.4 580.9L1179.5 577.5L1179.7 579.4L1179.8 584.5L1179.9 586.0L1180.1 581.6L1180.2 582.8L1180.3 574.3L1180.5 575.4L1180.6 586.9L1180.7 396.7L1180.9 326.1L1181.0 373.1L1181.1 443.7L1181.3 582.9L1181.4 580.1L1181.5 583.2L1181.7 586.2L1181.8 589.3L1181.9 592.3L1182.1 595.4L1182.2 598.5L1182.3 601.5L1182.5 604.6L1182.6 607.6L1182.7 610.7L1182.9 613.7L1183.0 616.8L1183.1 619.9" fill="none" stroke="#0000ff" stroke-width="1.9" stroke-linejoin="round" clip-path="url(#c3)"/>
<rect x="1108.6" y="520.1" width="73.0" height="15.8" rx="2.4" fill="#fff" fill-opacity="0.8" stroke="#ccc" stroke-opacity="0.8" stroke-width="1.2"/>
<path d="M1111.3 528.0H1133.7" stroke="#0000ff" stroke-width="1.8"/>
<text x="1137.0" y="531.4" font-size="10.0" text-anchor="start" >y=1024</text>
<rect x="911.0" y="516.9" width="274.20000000000005" height="119.89999999999998" fill="none" stroke="#000" stroke-width="1.8"/>
<text x="911.90" y="659.6" font-size="9.72" text-anchor="middle" >0</text>
<text x="978.15" y="659.6" font-size="9.72" text-anchor="middle" >500</text>
<text x="1044.40" y="659.6" font-size="9.72" text-anchor="middle" >1000</text>
<text x="1110.65" y="659.6" font-size="9.72" text-anchor="middle" >1500</text>
<text x="1176.90" y="659.6" font-size="9.72" text-anchor="middle" >2000</text>
<text x="896.2" y="623.70" font-size="9.72" text-anchor="end" >0</text>
<text x="896.2" y="594.30" font-size="9.72" text-anchor="end" >50</text>
<text x="896.2" y="564.90" font-size="9.72" text-anchor="end" >100</text>
<text x="896.2" y="535.50" font-size="9.72" text-anchor="end" >150</text>
<path d="M911.90 636.8v7M978.15 636.8v7M1044.40 636.8v7M1110.65 636.8v7M1176.90 636.8v7M911.0 620.10h-7M911.0 590.70h-7M911.0 561.30h-7M911.0 531.90h-7" stroke="#000" stroke-width="1.8" fill="none"/>
<text x="1048.1" y="677.4" font-size="10.4" text-anchor="middle" >X</text>
<text font-size="10.4" text-anchor="middle" transform="translate(866.4 577.7) rotate(-90)">counts</text>
<text font-size="10.4" text-anchor="middle" transform="translate(1194.3 574.5) rotate(90)">cut in x</text>
<clipPath id="c4"><rect x="911.0" y="689.4" width="274.20000000000005" height="119.5"/></clipPath>
<path d="M911.9 793.7L912.0 756.4L912.2 753.0L912.3 760.0L912.4 747.8L912.6 754.1L912.7 754.8L912.8 751.8L913.0 749.9L913.1 752.0L913.2 752.0L913.4 754.1L913.5 758.6L913.6 753.2L913.8 745.2L913.9 752.7L914.0 756.9L914.2 753.1L914.3 755.1L914.4 760.0L914.5 753.1L914.7 750.2L914.8 748.3L914.9 747.3L915.1 753.4L915.2 746.7L915.3 750.4L915.5 749.2L915.6 753.6L915.7 748.8L915.9 756.0L916.0 746.8L916.1 757.3L916.3 757.1L916.4 749.7L916.5 754.6L916.7 751.2L916.8 747.4L916.9 753.0L917.1 749.0L917.2 750.0L917.3 747.1L917.5 751.8L917.6 745.7L917.7 752.9L917.9 745.2L918.0 752.2L918.1 747.1L918.3 756.9L918.4 755.2L918.5 752.0L918.7 748.5L918.8 745.8L918.9 751.1L919.1 747.9L919.2 741.3L919.3 747.6L919.5 752.5L919.6 765.3L919.7 749.0L919.9 751.7L920.0 751.6L920.1 751.3L920.2 752.9L920.4 748.8L920.5 751.1L920.6 746.7L920.8 742.9L920.9 754.1L921.0 749.8L921.2 744.5L921.3 747.7L921.4 747.2L921.6 749.4L921.7 748.6L921.8 752.2L922.0 747.0L922.1 750.7L922.2 755.6L922.4 748.9L922.5 750.8L922.6 746.0L922.8 750.2L922.9 746.7L923.0 747.9L923.2 750.7L923.3 751.7L923.4 747.4L923.6 748.6L923.7 746.6L923.8 745.2L924.0 747.2L924.1 745.8L924.2 751.1L924.4 755.9L924.5 751.7L924.6 748.0L924.8 745.3L924.9 749.3L925.0 751.6L925.1 747.4L925.3 749.6L925.4 745.6L925.5 750.1L925.7 752.3L925.8 745.3L925.9 749.9L926.1 752.5L926.2 745.1L926.3 754.5L926.5 745.1L926.6 750.1L926.7 757.4L926.9 749.8L927.0 746.7L927.1 746.6L927.3 751.0L927.4 748.7L927.5 748.5L927.7 747.3L927.8 750.7L927.9 751.8L928.1 751.8L928.2 749.7L928.3 757.2L928.5 744.9L928.6 749.7L928.7 752.1L928.9 753.4L929.0 751.9L929.1 740.7L929.3 747.8L929.4 748.3L929.5 748.1L929.7 748.7L929.8 747.7L929.9 752.9L930.1 748.1L930.2 744.8L930.3 747.7L930.4 749.5L930.6 744.7L930.7 744.0L930.8 753.8L931.0 746.6L931.1 746.5L931.2 748.6L931.4 749.2L931.5 741.1L931.6 750.1L931.8 749.2L931.9 750.4L932.0 752.6L932.2 751.2L932.3 744.2L932.4 753.3L932.6 749.6L932.7 755.3L932.8 748.3L933.0 747.9L933.1 750.4L933.2 751.2L933.4 750.5L933.5 754.7L933.6 751.8L933.8 746.2L933.9 748.2L934.0 746.6L934.2 749.8L934.3 744.9L934.4 749.7L934.6 747.8L934.7 747.2L934.8 749.4L935.0 748.9L935.1 751.3L935.2 747.4L935.4 749.0L935.5 750.8L935.6 752.5L935.8 745.3L935.9 745.4L936.0 743.4L936.1 744.9L936.3 751.8L936.4 753.9L936.5 752.2L936.7 749.7L936.8 749.8L936.9 748.3L937.1 746.2L937.2 749.9L937.3 745.1L937.5 750.3L937.6 744.4L937.7 747.1L937.9 744.8L938.0 750.4L938.1 755.8L938.3 745.3L938.4 750.5L938.5 748.2L938.7 752.7L938.8 744.7L938.9 744.0L939.1 749.3L939.2 751.8L939.3 742.8L939.5 748.9L939.6 753.0L939.7 749.0L939.9 745.0L940.0 747.8L940.1 746.5L940.3 746.7L940.4 746.1L940.5 745.8L940.7 743.5L940.8 749.2L940.9 744.2L941.0 744.5L941.2 748.5L941.3 747.8L941.4 748.1L941.6 751.2L941.7 746.2L941.8 747.0L942.0 752.0L942.1 750.2L942.2 742.3L942.4 743.3L942.5 746.5L942.6 746.3L942.8 749.9L942.9 746.1L943.0 747.0L943.2 749.5L943.3 750.8L943.4 747.8L943.6 748.8L943.7 743.1L943.8 747.0L944.0 746.6L944.1 745.9L944.2 747.3L944.4 743.1L944.5 746.4L944.6 746.0L944.8 754.1L944.9 749.9L945.0 746.3L945.2 748.1L945.3 749.2L945.4 749.8L945.6 744.9L945.7 749.9L945.8 744.6L946.0 747.4L946.1 745.7L946.2 744.4L946.4 738.3L946.5 741.6L946.6 747.2L946.7 751.3L946.9 751.7L947.0 743.9L947.1 740.9L947.3 746.1L947.4 742.3L947.5 746.5L947.7 746.0L947.8 749.1L947.9 750.2L948.1 747.4L948.2 741.6L948.3 747.5L948.5 746.4L948.6 741.2L948.7 745.5L948.9 747.3L949.0 746.4L949.1 746.4L949.3 745.8L949.4 745.8L949.5 746.2L949.7 747.0L949.8 741.6L949.9 742.6L950.1 747.0L950.2 744.6L950.3 742.2L950.5 745.4L950.6 739.9L950.7 740.1L950.9 746.7L951.0 738.0L951.1 744.6L951.3 744.6L951.4 747.7L951.5 747.6L951.6 749.9L951.8 749.1L951.9 749.4L952.0 744.7L952.2 745.5L952.3 741.6L952.4 747.1L952.6 747.8L952.7 744.3L952.8 746.1L953.0 746.0L953.1 745.9L953.2 746.9L953.4 749.1L953.5 744.8L953.6 748.6L953.8 745.3L953.9 749.1L954.0 749.8L954.2 752.2L954.3 747.0L954.4 744.4L954.6 743.1L954.7 744.0L954.8 740.6L955.0 748.8L955.1 750.0L955.2 745.1L955.4 746.4L955.5 747.3L955.6 745.6L955.8 746.5L955.9 749.8L956.0 746.1L956.2 751.4L956.3 743.9L956.4 746.9L956.6 746.2L956.7 745.1L956.8 745.9L956.9 745.9L957.1 744.9L957.2 740.5L957.3 751.8L957.5 738.0L957.6 745.0L957.7 763.6L957.9 763.6L958.0 743.2L958.1 753.0L958.3 747.1L958.4 745.4L958.5 744.8L958.7 749.0L958.8 749.6L958.9 741.7L959.1 746.9L959.2 748.3L959.3 741.7L959.5 748.9L959.6 743.3L959.7 744.0L959.9 738.3L960.0 741.7L960.1 743.7L960.3 741.1L960.4 748.3L960.5 748.9L960.7 750.1L960.8 745.1L960.9 739.5L961.1 742.1L961.2 744.0L961.3 743.4L961.5 748.4L961.6 744.4L961.7 746.3L961.9 744.5L962.0 746.9L962.1 745.8L962.2 751.0L962.4 740.8L962.5 748.7L962.6 751.8L962.8 749.5L962.9 741.4L963.0 748.2L963.2 740.5L963.3 749.9L963.4 747.0L963.6 749.7L963.7 741.0L963.8 742.3L964.0 739.4L964.1 745.4L964.2 737.6L964.4 737.1L964.5 739.3L964.6 744.4L964.8 746.1L964.9 746.1L965.0 744.0L965.2 746.3L965.3 753.2L965.4 750.9L965.6 745.6L965.7 746.5L965.8 742.7L966.0 742.3L966.1 744.6L966.2 743.3L966.4 744.5L966.5 741.5L966.6 746.1L966.8 743.0L966.9 743.9L967.0 745.4L967.2 748.8L967.3 748.9L967.4 744.8L967.5 743.9L967.7 736.7L967.8 743.3L967.9 744.3L968.1 746.8L968.2 745.7L968.3 749.8L968.5 743.9L968.6 746.3L968.7 746.4L968.9 751.5L969.0 742.1L969.1 754.8L969.3 737.0L969.4 742.2L969.5 741.0L969.7 743.3L969.8 745.8L969.9 748.4L970.1 745.2L970.2 743.9L970.3 742.4L970.5 740.1L970.6 749.9L970.7 741.7L970.9 753.2L971.0 745.1L971.1 738.2L971.3 744.3L971.4 742.4L971.5 749.8L971.7 741.5L971.8 740.5L971.9 746.5L972.1 747.7L972.2 748.3L972.3 753.3L972.5 750.0L972.6 746.1L972.7 741.5L972.9 750.9L973.0 745.1L973.1 749.2L973.2 743.8L973.4 742.0L973.5 744.4L973.6 746.1L973.8 745.1L973.9 750.0L974.0 752.1L974.2 747.5L974.3 753.4L974.4 746.4L974.6 743.8L974.7 750.9L974.8 744.0L975.0 743.2L975.1 747.0L975.2 743.7L975.4 743.4L975.5 744.8L975.6 742.2L975.8 746.8L975.9 744.2L976.0 746.7L976.2 739.9L976.3 743.5L976.4 749.9L976.6 745.7L976.7 743.1L976.8 744.1L977.0 747.0L977.1 746.0L977.2 750.1L977.4 744.0L977.5 749.3L977.6 747.2L977.8 746.6L977.9 747.6L978.0 747.3L978.1 741.1L978.3 743.8L978.4 750.5L978.5 744.6L978.7 741.4L978.8 743.7L978.9 745.7L979.1 742.2L979.2 742.7L979.3 747.9L979.5 746.5L979.6 737.7L979.7 746.6L979.9 744.7L980.0 747.0L980.1 747.5L980.3 747.2L980.4 749.2L980.5 744.1L980.7 743.7L980.8 742.3L980.9 748.3L981.1 744.4L981.2 752.0L981.3 746.0L981.5 742.6L981.6 749.1L981.7 749.3L981.9 745.4L982.0 748.8L982.1 743.3L982.3 749.5L982.4 749.4L982.5 742.6L982.7 748.3L982.8 744.2L982.9 746.5L983.1 749.2L983.2 746.5L983.3 743.8L983.4 742.6L983.6 748.2L983.7 745.7L983.8 745.0L984.0 742.7L984.1 743.3L984.2 747.3L984.4 745.5L984.5 747.2L984.6 746.1L984.8 748.3L984.9 744.8L985.0 747.9L985.2 744.8L985.3 749.3L985.4 742.6L985.6 744.3L985.7 749.6L985.8 742.3L986.0 747.2L986.1 749.4L986.2 747.6L986.4 746.0L986.5 742.0L986.6 744.3L986.8 744.1L986.9 736.5L987.0 738.8L987.2 742.7L987.3 743.9L987.4 743.1L987.6 741.4L987.7 745.9L987.8 742.7L988.0 741.7L988.1 741.9L988.2 748.3L988.4 748.8L988.5 746.4L988.6 742.9L988.8 748.9L988.9 744.2L989.0 749.0L989.1 756.1L989.3 742.9L989.4 749.8L989.5 747.2L989.7 748.6L989.8 747.0L989.9 750.4L990.1 746.0L990.2 745.8L990.3 745.3L990.5 746.7L990.6 744.2L990.7 744.3L990.9 745.4L991.0 739.6L991.1 747.4L991.3 747.8L991.4 748.3L991.5 749.6L991.7 748.5L991.8 744.7L991.9 750.5L992.1 749.1L992.2 743.4L992.3 744.9L992.5 745.3L992.6 745.7L992.7 749.4L992.9 744.9L993.0 746.6L993.1 746.0L993.3 750.4L993.4 750.4L993.5 743.1L993.7 749.6L993.8 743.6L993.9 746.0L994.0 743.3L994.2 744.0L994.3 742.3L994.4 745.8L994.6 747.4L994.7 744.6L994.8 746.8L995.0 748.1L995.1 746.5L995.2 745.5L995.4 748.2L995.5 752.2L995.6 740.7L995.8 751.3L995.9 748.5L996.0 750.1L996.2 748.0L996.3 745.1L996.4 748.3L996.6 751.1L996.7 744.2L996.8 748.6L997.0 747.1L997.1 744.5L997.2 743.8L997.4 743.1L997.5 754.0L997.6 748.5L997.8 744.7L997.9 746.5L998.0 741.7L998.2 744.3L998.3 744.7L998.4 749.4L998.6 747.9L998.7 746.4L998.8 744.8L999.0 748.1L999.1 742.2L999.2 744.1L999.4 747.2L999.5 746.8L999.6 748.8L999.7 739.9L999.9 746.7L1000.0 747.5L1000.1 750.7L1000.3 751.7L1000.4 749.7L1000.5 746.2L1000.7 746.6L1000.8 742.3L1000.9 745.8L1001.1 743.2L1001.2 743.4L1001.3 747.1L1001.5 744.6L1001.6 746.4L1001.7 747.5L1001.9 749.4L1002.0 748.4L1002.1 741.4L1002.3 743.7L1002.4 745.1L1002.5 744.2L1002.7 749.5L1002.8 743.5L1002.9 749.6L1003.1 748.5L1003.2 748.2L1003.3 752.4L1003.5 743.4L1003.6 749.5L1003.7 748.7L1003.9 746.1L1004.0 746.9L1004.1 744.9L1004.3 746.7L1004.4 747.0L1004.5 741.2L1004.6 744.4L1004.8 743.4L1004.9 742.1L1005.0 751.1L1005.2 744.3L1005.3 742.5L1005.4 740.6L1005.6 741.5L1005.7 738.5L1005.8 748.8L1006.0 744.2L1006.1 746.0L1006.2 748.6L1006.4 745.3L1006.5 742.9L1006.6 747.4L1006.8 750.3L1006.9 744.2L1007.0 739.9L1007.2 744.6L1007.3 750.4L1007.4 746.0L1007.6 745.5L1007.7 748.8L1007.8 741.9L1008.0 739.3L1008.1 746.6L1008.2 741.9L1008.4 740.1L1008.5 746.4L1008.6 744.3L1008.8 745.7L1008.9 747.0L1009.0 743.7L1009.2 740.5L1009.3 746.2L1009.4 745.5L1009.6 748.5L1009.7 744.1L1009.8 745.2L1010.0 743.1L1010.1 745.8L1010.2 746.7L1010.3 751.4L1010.5 749.3L1010.6 743.1L1010.7 746.3L1010.9 742.3L1011.0 746.0L1011.1 742.8L1011.3 743.1L1011.4 750.8L1011.5 748.3L1011.7 744.2L1011.8 745.3L1011.9 748.8L1012.1 748.1L1012.2 747.3L1012.3 745.7L1012.5 743.8L1012.6 747.1L1012.7 740.7L1012.9 742.7L1013.0 743.0L1013.1 752.8L1013.3 745.5L1013.4 744.1L1013.5 745.0L1013.7 741.5L1013.8 742.9L1013.9 752.4L1014.1 746.9L1014.2 749.9L1014.3 749.1L1014.5 750.5L1014.6 745.2L1014.7 750.1L1014.9 744.6L1015.0 745.4L1015.1 746.4L1015.2 743.4L1015.4 745.5L1015.5 744.9L1015.6 746.8L1015.8 746.5L1015.9 746.5L1016.0 743.2L1016.2 748.3L1016.3 748.0L1016.4 745.9L1016.6 750.2L1016.7 745.5L1016.8 746.8L1017.0 746.7L1017.1 748.6L1017.2 741.6L1017.4 749.8L1017.5 749.4L1017.6 747.4L1017.8 751.2L1017.9 746.9L1018.0 746.9L1018.2 750.2L1018.3 745.9L1018.4 753.9L1018.6 744.5L1018.7 743.1L1018.8 746.2L1019.0 741.1L1019.1 743.1L1019.2 744.4L1019.4 752.6L1019.5 750.0L1019.6 749.5L1019.8 745.5L1019.9 747.2L1020.0 740.8L1020.2 748.0L1020.3 751.0L1020.4 747.1L1020.5 748.1L1020.7 754.8L1020.8 748.5L1020.9 749.7L1021.1 747.8L1021.2 742.5L1021.3 743.7L1021.5 747.3L1021.6 745.8L1021.7 741.1L1021.9 749.1L1022.0 745.7L1022.1 744.4L1022.3 746.1L1022.4 745.2L1022.5 754.1L1022.7 747.4L1022.8 741.6L1022.9 748.7L1023.1 746.5L1023.2 743.3L1023.3 743.9L1023.5 744.1L1023.6 748.2L1023.7 736.3L1023.9 748.3L1024.0 747.2L1024.1 745.2L1024.3 747.8L1024.4 746.8L1024.5 751.8L1024.7 739.6L1024.8 754.1L1024.9 742.8L1025.1 746.9L1025.2 756.5L1025.3 736.8L1025.5 741.4L1025.6 748.7L1025.7 749.2L1025.8 747.9L1026.0 749.5L1026.1 746.3L1026.2 746.9L1026.4 742.5L1026.5 747.1L1026.6 744.0L1026.8 747.6L1026.9 746.2L1027.0 743.5L1027.2 755.7L1027.3 749.1L1027.4 747.2L1027.6 745.9L1027.7 752.9L1027.8 746.9L1028.0 748.4L1028.1 751.5L1028.2 737.8L1028.4 749.1L1028.5 743.8L1028.6 748.9L1028.8 743.3L1028.9 743.7L1029.0 747.7L1029.2 748.9L1029.3 746.0L1029.4 742.1L1029.6 747.6L1029.7 742.4L1029.8 744.7L1030.0 752.6L1030.1 749.0L1030.2 748.3L1030.4 743.9L1030.5 741.4L1030.6 740.6L1030.8 744.6L1030.9 753.1L1031.0 747.3L1031.2 742.9L1031.3 746.2L1031.4 748.3L1031.5 744.2L1031.7 749.4L1031.8 740.6L1031.9 745.3L1032.1 739.1L1032.2 746.9L1032.3 744.9L1032.5 744.6L1032.6 745.2L1032.7 746.0L1032.9 748.2L1033.0 743.5L1033.1 746.4L1033.3 740.2L1033.4 745.2L1033.5 746.0L1033.7 750.2L1033.8 748.0L1033.9 751.7L1034.1 753.7L1034.2 749.1L1034.3 743.1L1034.5 743.5L1034.6 749.7L1034.7 755.1L1034.9 745.2L1035.0 742.9L1035.1 757.4L1035.3 745.0L1035.4 746.8L1035.5 749.0L1035.7 749.8L1035.8 743.4L1035.9 744.9L1036.1 752.0L1036.2 750.2L1036.3 743.5L1036.5 741.6L1036.6 741.0L1036.7 748.3L1036.8 741.7L1037.0 740.3L1037.1 746.5L1037.2 741.2L1037.4 747.9L1037.5 743.7L1037.6 745.1L1037.8 746.1L1037.9 745.1L1038.0 739.7L1038.2 742.7L1038.3 746.2L1038.4 747.7L1038.6 750.1L1038.7 749.2L1038.8 750.1L1039.0 746.3L1039.1 749.4L1039.2 745.9L1039.4 744.4L1039.5 746.0L1039.6 745.6L1039.8 745.5L1039.9 741.7L1040.0 746.5L1040.2 748.3L1040.3 745.0L1040.4 738.2L1040.6 749.4L1040.7 741.0L1040.8 748.1L1041.0 748.7L1041.1 750.9L1041.2 749.5L1041.4 739.8L1041.5 746.4L1041.6 744.9L1041.8 748.1L1041.9 749.8L1042.0 743.0L1042.1 747.9L1042.3 748.0L1042.4 747.5L1042.5 751.0L1042.7 754.0L1042.8 751.4L1042.9 743.0L1043.1 746.9L1043.2 744.6L1043.3 748.3L1043.5 745.4L1043.6 745.3L1043.7 750.0L1043.9 740.2L1044.0 743.0L1044.1 739.4L1044.3 744.4L1044.4 750.6L1044.5 737.6L1044.7 741.0L1044.8 750.1L1044.9 746.9L1045.1 746.0L1045.2 744.6L1045.3 745.8L1045.5 744.6L1045.6 737.5L1045.7 746.0L1045.9 744.0L1046.0 743.0L1046.1 743.0L1046.3 740.6L1046.4 751.6L1046.5 740.6L1046.7 745.5L1046.8 751.3L1046.9 741.6L1047.0 747.1L1047.2 748.6L1047.3 751.0L1047.4 747.4L1047.6 746.8L1047.7 750.0L1047.8 738.2L1048.0 747.7L1048.1 743.4L1048.2 754.8L1048.4 744.9L1048.5 745.0L1048.6 742.8L1048.8 744.9L1048.9 749.8L1049.0 751.9L1049.2 745.3L1049.3 744.4L1049.4 747.6L1049.6 747.9L1049.7 743.2L1049.8 745.3L1050.0 742.2L1050.1 749.7L1050.2 748.0L1050.4 742.6L1050.5 749.4L1050.6 741.2L1050.8 746.0L1050.9 747.5L1051.0 751.6L1051.2 749.4L1051.3 746.4L1051.4 739.8L1051.6 749.1L1051.7 744.8L1051.8 740.5L1052.0 747.4L1052.1 745.0L1052.2 745.5L1052.3 742.4L1052.5 748.3L1052.6 751.7L1052.7 749.2L1052.9 748.3L1053.0 736.4L1053.1 738.9L1053.3 747.7L1053.4 750.5L1053.5 741.5L1053.7 744.5L1053.8 743.5L1053.9 742.8L1054.1 742.3L1054.2 749.3L1054.3 751.6L1054.5 751.1L1054.6 750.7L1054.7 744.1L1054.9 748.1L1055.0 746.8L1055.1 746.2L1055.3 747.1L1055.4 744.5L1055.5 744.2L1055.7 746.1L1055.8 748.9L1055.9 742.4L1056.1 744.2L1056.2 747.9L1056.3 741.8L1056.5 749.1L1056.6 749.6L1056.7 750.3L1056.9 752.8L1057.0 747.3L1057.1 746.3L1057.3 746.3L1057.4 741.0L1057.5 753.3L1057.7 750.5L1057.8 750.0L1057.9 746.4L1058.0 739.7L1058.2 749.1L1058.3 745.3L1058.4 745.6L1058.6 748.5L1058.7 744.4L1058.8 741.4L1059.0 750.8L1059.1 748.9L1059.2 745.8L1059.4 747.6L1059.5 744.6L1059.6 748.0L1059.8 747.8L1059.9 749.6L1060.0 744.5L1060.2 748.5L1060.3 740.3L1060.4 746.2L1060.6 747.3L1060.7 738.7L1060.8 750.2L1061.0 744.8L1061.1 750.5L1061.2 747.7L1061.4 748.0L1061.5 743.1L1061.6 762.4L1061.8 740.2L1061.9 761.8L1062.0 746.4L1062.2 752.0L1062.3 743.5L1062.4 746.6L1062.6 749.3L1062.7 748.2L1062.8 747.1L1063.0 748.4L1063.1 750.0L1063.2 743.3L1063.3 746.0L1063.5 749.2L1063.6 741.2L1063.7 746.1L1063.9 741.8L1064.0 751.0L1064.1 747.0L1064.3 747.1L1064.4 750.1L1064.5 744.8L1064.7 745.8L1064.8 742.7L1064.9 741.3L1065.1 742.4L1065.2 745.8L1065.3 749.5L1065.5 746.5L1065.6 739.6L1065.7 748.6L1065.9 747.4L1066.0 746.8L1066.1 750.0L1066.3 744.5L1066.4 752.1L1066.5 741.8L1066.7 744.7L1066.8 747.6L1066.9 746.6L1067.1 745.6L1067.2 744.0L1067.3 744.8L1067.5 752.3L1067.6 748.4L1067.7 740.1L1067.9 743.7L1068.0 741.2L1068.1 741.2L1068.2 746.9L1068.4 751.4L1068.5 749.8L1068.6 748.7L1068.8 747.0L1068.9 748.4L1069.0 745.5L1069.2 747.9L1069.3 744.9L1069.4 748.8L1069.6 749.6L1069.7 747.0L1069.8 744.3L1070.0 742.1L1070.1 743.7L1070.2 745.2L1070.4 746.8L1070.5 747.0L1070.6 746.0L1070.8 744.0L1070.9 743.1L1071.0 741.5L1071.2 744.7L1071.3 742.7L1071.4 743.7L1071.6 742.1L1071.7 748.4L1071.8 744.9L1072.0 754.7L1072.1 747.8L1072.2 747.6L1072.4 751.7L1072.5 746.9L1072.6 748.4L1072.8 744.0L1072.9 746.8L1073.0 748.2L1073.2 745.7L1073.3 743.5L1073.4 746.0L1073.5 747.6L1073.7 745.6L1073.8 749.2L1073.9 747.1L1074.1 741.1L1074.2 739.5L1074.3 746.0L1074.5 745.2L1074.6 741.9L1074.7 560.0L1074.9 502.0L1075.0 560.0L1075.1 676.0L1075.3 746.1L1075.4 746.7L1075.5 746.8L1075.7 747.2L1075.8 753.7L1075.9 748.8L1076.1 742.8L1076.2 744.2L1076.3 743.2L1076.5 748.8L1076.6 746.4L1076.7 748.4L1076.9 744.8L1077.0 747.7L1077.1 741.9L1077.3 740.5L1077.4 748.3L1077.5 748.5L1077.7 739.3L1077.8 749.2L1077.9 749.6L1078.1 744.9L1078.2 751.2L1078.3 748.8L1078.5 747.1L1078.6 747.6L1078.7 750.9L1078.8 747.0L1079.0 741.5L1079.1 742.5L1079.2 743.6L1079.4 745.4L1079.5 749.7L1079.6 746.7L1079.8 749.9L1079.9 749.3L1080.0 742.6L1080.2 741.2L1080.3 745.3L1080.4 747.1L1080.6 749.4L1080.7 753.3L1080.8 749.6L1081.0 741.9L1081.1 744.0L1081.2 746.3L1081.4 752.6L1081.5 742.7L1081.6 743.8L1081.8 751.1L1081.9 761.8L1082.0 740.6L1082.2 748.3L1082.3 749.7L1082.4 741.3L1082.6 743.3L1082.7 741.2L1082.8 750.7L1083.0 748.5L1083.1 745.1L1083.2 744.0L1083.4 738.0L1083.5 749.4L1083.6 744.4L1083.8 738.2L1083.9 748.7L1084.0 750.6L1084.2 747.2L1084.3 745.2L1084.4 749.9L1084.5 744.4L1084.7 748.1L1084.8 750.1L1084.9 744.7L1085.1 745.5L1085.2 742.9L1085.3 743.3L1085.5 741.1L1085.6 743.3L1085.7 746.4L1085.9 747.8L1086.0 740.9L1086.1 752.2L1086.3 747.0L1086.4 749.9L1086.5 747.4L1086.7 740.5L1086.8 744.4L1086.9 745.9L1087.1 745.0L1087.2 743.7L1087.3 745.9L1087.5 750.4L1087.6 741.4L1087.7 744.0L1087.9 741.4L1088.0 751.5L1088.1 745.7L1088.3 747.0L1088.4 749.9L1088.5 741.6L1088.7 745.1L1088.8 743.2L1088.9 753.1L1089.1 750.2L1089.2 745.3L1089.3 746.5L1089.5 743.0L1089.6 745.6L1089.7 745.0L1089.8 751.5L1090.0 740.8L1090.1 744.3L1090.2 746.8L1090.4 750.4L1090.5 745.3L1090.6 746.5L1090.8 743.1L1090.9 749.9L1091.0 746.0L1091.2 753.0L1091.3 742.7L1091.4 738.4L1091.6 749.0L1091.7 743.7L1091.8 746.4L1092.0 748.2L1092.1 747.3L1092.2 750.3L1092.4 744.3L1092.5 742.1L1092.6 744.5L1092.8 745.8L1092.9 745.3L1093.0 747.1L1093.2 747.7L1093.3 746.7L1093.4 743.0L1093.6 750.8L1093.7 750.1L1093.8 746.8L1094.0 746.4L1094.1 751.3L1094.2 748.1L1094.4 735.8L1094.5 748.5L1094.6 743.2L1094.8 749.6L1094.9 747.0L1095.0 750.6L1095.1 741.5L1095.3 745.8L1095.4 746.1L1095.5 748.0L1095.7 745.9L1095.8 747.0L1095.9 744.5L1096.1 741.7L1096.2 750.3L1096.3 743.4L1096.5 746.2L1096.6 749.7L1096.7 745.4L1096.9 741.4L1097.0 739.7L1097.1 742.0L1097.3 750.2L1097.4 744.7L1097.5 745.7L1097.7 741.1L1097.8 745.7L1097.9 742.7L1098.1 742.5L1098.2 746.3L1098.3 745.5L1098.5 747.1L1098.6 734.4L1098.7 748.1L1098.9 743.8L1099.0 751.2L1099.1 750.9L1099.3 742.7L1099.4 744.3L1099.5 741.6L1099.7 748.0L1099.8 747.4L1099.9 741.9L1100.0 745.6L1100.2 749.5L1100.3 748.5L1100.4 746.9L1100.6 746.7L1100.7 746.1L1100.8 741.2L1101.0 744.9L1101.1 744.8L1101.2 752.7L1101.4 750.4L1101.5 750.9L1101.6 747.9L1101.8 741.0L1101.9 747.2L1102.0 747.3L1102.2 748.3L1102.3 747.2L1102.4 742.7L1102.6 743.2L1102.7 749.1L1102.8 747.2L1103.0 747.6L1103.1 748.7L1103.2 748.4L1103.4 750.5L1103.5 746.0L1103.6 756.8L1103.8 742.1L1103.9 748.0L1104.0 748.0L1104.2 742.8L1104.3 750.7L1104.4 743.3L1104.6 750.4L1104.7 742.9L1104.8 745.9L1105.0 746.5L1105.1 752.8L1105.2 741.8L1105.3 746.3L1105.5 747.3L1105.6 743.8L1105.7 744.3L1105.9 741.9L1106.0 751.1L1106.1 749.4L1106.3 752.2L1106.4 743.0L1106.5 752.5L1106.7 746.2L1106.8 746.6L1106.9 745.5L1107.1 745.7L1107.2 746.2L1107.3 741.5L1107.5 749.0L1107.6 745.9L1107.7 738.5L1107.9 746.7L1108.0 742.9L1108.1 748.1L1108.3 747.0L1108.4 748.2L1108.5 748.7L1108.7 750.1L1108.8 751.7L1108.9 742.6L1109.1 743.1L1109.2 750.4L1109.3 745.0L1109.5 747.3L1109.6 744.8L1109.7 751.0L1109.9 745.6L1110.0 743.1L1110.1 741.6L1110.3 745.8L1110.4 751.4L1110.5 748.8L1110.7 748.7L1110.8 745.3L1110.9 748.6L1111.0 747.7L1111.2 749.6L1111.3 737.0L1111.4 743.0L1111.6 748.5L1111.7 741.8L1111.8 750.4L1112.0 746.6L1112.1 742.1L1112.2 745.0L1112.4 749.0L1112.5 752.1L1112.6 748.5L1112.8 744.2L1112.9 742.9L1113.0 747.3L1113.2 744.8L1113.3 746.7L1113.4 742.1L1113.6 744.6L1113.7 748.7L1113.8 745.4L1114.0 749.2L1114.1 747.0L1114.2 749.4L1114.4 745.4L1114.5 744.9L1114.6 748.5L1114.8 740.4L1114.9 749.1L1115.0 747.0L1115.2 742.8L1115.3 749.9L1115.4 745.3L1115.6 745.4L1115.7 746.3L1115.8 745.7L1116.0 750.5L1116.1 752.7L1116.2 742.5L1116.3 745.5L1116.5 745.0L1116.6 746.7L1116.7 739.9L1116.9 744.6L1117.0 750.9L1117.1 749.7L1117.3 749.7L1117.4 747.9L1117.5 743.2L1117.7 747.4L1117.8 748.0L1117.9 741.3L1118.1 746.4L1118.2 750.7L1118.3 745.4L1118.5 748.9L1118.6 752.4L1118.7 743.0L1118.9 745.5L1119.0 750.8L1119.1 742.5L1119.3 743.1L1119.4 747.0L1119.5 747.1L1119.7 746.3L1119.8 742.0L1119.9 742.8L1120.1 745.4L1120.2 746.5L1120.3 751.0L1120.5 743.8L1120.6 734.0L1120.7 749.8L1120.9 772.3L1121.0 771.1L1121.1 750.8L1121.2 747.1L1121.4 747.0L1121.5 742.9L1121.6 751.9L1121.8 742.9L1121.9 746.5L1122.0 753.4L1122.2 740.0L1122.3 748.6L1122.4 745.0L1122.6 742.0L1122.7 745.7L1122.8 748.3L1123.0 743.4L1123.1 747.1L1123.2 746.1L1123.4 731.7L1123.5 742.4L1123.6 750.8L1123.8 749.4L1123.9 751.2L1124.0 743.4L1124.2 751.0L1124.3 750.8L1124.4 743.3L1124.6 746.9L1124.7 742.4L1124.8 749.8L1125.0 740.0L1125.1 757.5L1125.2 750.8L1125.4 747.8L1125.5 748.9L1125.6 747.2L1125.8 746.8L1125.9 722.4L1126.0 705.0L1126.2 710.8L1126.3 728.2L1126.4 748.1L1126.5 748.9L1126.7 741.3L1126.8 747.7L1126.9 747.3L1127.1 747.3L1127.2 752.8L1127.3 741.2L1127.5 745.6L1127.6 741.0L1127.7 746.5L1127.9 748.3L1128.0 746.9L1128.1 749.3L1128.3 743.4L1128.4 739.5L1128.5 750.6L1128.7 746.8L1128.8 746.9L1128.9 752.1L1129.1 744.3L1129.2 749.7L1129.3 745.0L1129.5 744.3L1129.6 740.3L1129.7 746.8L1129.9 749.0L1130.0 745.7L1130.1 749.0L1130.3 745.4L1130.4 746.0L1130.5 742.2L1130.7 745.1L1130.8 744.7L1130.9 747.0L1131.1 744.2L1131.2 742.4L1131.3 748.9L1131.5 745.5L1131.6 745.6L1131.7 748.5L1131.8 742.7L1132.0 741.0L1132.1 752.0L1132.2 748.0L1132.4 747.8L1132.5 746.8L1132.6 749.9L1132.8 738.6L1132.9 739.1L1133.0 743.0L1133.2 749.3L1133.3 746.6L1133.4 749.7L1133.6 748.1L1133.7 743.5L1133.8 752.3L1134.0 752.0L1134.1 750.7L1134.2 742.2L1134.4 749.8L1134.5 750.9L1134.6 748.0L1134.8 749.7L1134.9 747.9L1135.0 751.0L1135.2 749.1L1135.3 748.1L1135.4 748.0L1135.6 745.2L1135.7 752.6L1135.8 763.0L1136.0 749.6L1136.1 750.4L1136.2 749.6L1136.4 746.5L1136.5 745.6L1136.6 747.4L1136.8 747.0L1136.9 742.0L1137.0 746.3L1137.2 753.2L1137.3 743.2L1137.4 748.1L1137.5 746.8L1137.7 744.7L1137.8 747.9L1137.9 747.2L1138.1 747.8L1138.2 747.1L1138.3 750.5L1138.5 747.1L1138.6 751.3L1138.7 740.3L1138.9 742.7L1139.0 748.9L1139.1 746.1L1139.3 748.1L1139.4 748.8L1139.5 747.0L1139.7 745.7L1139.8 750.0L1139.9 749.6L1140.1 747.1L1140.2 739.3L1140.3 746.1L1140.5 749.6L1140.6 746.9L1140.7 745.4L1140.9 749.8L1141.0 742.5L1141.1 745.9L1141.3 746.5L1141.4 745.4L1141.5 747.1L1141.7 747.6L1141.8 746.1L1141.9 748.5L1142.1 748.8L1142.2 747.7L1142.3 747.9L1142.5 749.2L1142.6 746.4L1142.7 745.6L1142.8 747.1L1143.0 748.8L1143.1 743.1L1143.2 746.0L1143.4 748.0L1143.5 754.0L1143.6 747.2L1143.8 748.3L1143.9 746.1L1144.0 748.9L1144.2 749.4L1144.3 745.5L1144.4 745.4L1144.6 748.3L1144.7 749.6L1144.8 746.1L1145.0 743.9L1145.1 743.3L1145.2 749.4L1145.4 744.9L1145.5 749.0L1145.6 740.1L1145.8 745.3L1145.9 749.1L1146.0 744.1L1146.2 744.3L1146.3 741.9L1146.4 748.3L1146.6 753.3L1146.7 742.8L1146.8 741.5L1147.0 750.8L1147.1 747.0L1147.2 744.8L1147.4 743.8L1147.5 754.3L1147.6 744.0L1147.8 751.8L1147.9 745.4L1148.0 748.2L1148.1 747.2L1148.3 746.8L1148.4 741.6L1148.5 744.2L1148.7 752.4L1148.8 746.8L1148.9 748.6L1149.1 743.8L1149.2 743.1L1149.3 753.6L1149.5 744.0L1149.6 748.6L1149.7 750.7L1149.9 747.3L1150.0 749.2L1150.1 749.2L1150.3 746.6L1150.4 748.5L1150.5 752.5L1150.7 747.5L1150.8 749.9L1150.9 747.0L1151.1 747.1L1151.2 741.8L1151.3 753.4L1151.5 746.3L1151.6 746.9L1151.7 747.7L1151.9 745.4L1152.0 747.7L1152.1 746.5L1152.3 745.5L1152.4 743.8L1152.5 751.7L1152.7 746.6L1152.8 745.5L1152.9 748.3L1153.0 750.7L1153.2 746.8L1153.3 745.6L1153.4 750.5L1153.6 753.2L1153.7 748.0L1153.8 618.0L1154.0 502.0L1154.1 560.0L1154.2 676.0L1154.4 750.9L1154.5 752.1L1154.6 744.5L1154.8 751.1L1154.9 749.4L1155.0 746.0L1155.2 750.9L1155.3 744.5L1155.4 748.9L1155.6 742.4L1155.7 747.1L1155.8 747.3L1156.0 749.4L1156.1 747.9L1156.2 741.0L1156.4 751.6L1156.5 747.1L1156.6 742.0L1156.8 746.3L1156.9 743.1L1157.0 751.9L1157.2 741.8L1157.3 751.4L1157.4 741.7L1157.6 746.6L1157.7 750.7L1157.8 744.5L1158.0 746.4L1158.1 744.4L1158.2 745.3L1158.3 748.9L1158.5 750.5L1158.6 751.2L1158.7 755.1L1158.9 752.7L1159.0 742.9L1159.1 746.7L1159.3 745.6L1159.4 753.5L1159.5 753.8L1159.7 742.6L1159.8 754.5L1159.9 747.4L1160.1 745.8L1160.2 747.4L1160.3 754.8L1160.5 745.7L1160.6 749.0L1160.7 748.9L1160.9 749.2L1161.0 750.0L1161.1 751.9L1161.3 748.2L1161.4 754.9L1161.5 751.0L1161.7 754.4L1161.8 744.5L1161.9 751.8L1162.1 747.8L1162.2 749.8L1162.3 744.6L1162.5 743.7L1162.6 751.9L1162.7 744.9L1162.9 747.4L1163.0 751.5L1163.1 747.1L1163.3 760.1L1163.4 753.2L1163.5 746.2L1163.7 747.8L1163.8 748.4L1163.9 748.5L1164.0 752.5L1164.2 746.4L1164.3 750.2L1164.4 748.3L1164.6 753.8L1164.7 749.2L1164.8 751.5L1165.0 745.7L1165.1 740.1L1165.2 748.3L1165.4 749.6L1165.5 745.4L1165.6 750.4L1165.8 749.6L1165.9 750.9L1166.0 750.1L1166.2 752.3L1166.3 749.2L1166.4 745.7L1166.6 749.1L1166.7 746.6L1166.8 753.3L1167.0 749.4L1167.1 749.9L1167.2 752.3L1167.4 750.4L1167.5 744.2L1167.6 754.2L1167.8 743.4L1167.9 739.3L1168.0 750.2L1168.2 757.0L1168.3 749.9L1168.4 743.8L1168.6 750.7L1168.7 750.7L1168.8 751.5L1169.0 745.1L1169.1 753.6L1169.2 750.9L1169.3 745.6L1169.5 753.0L1169.6 752.1L1169.7 752.3L1169.9 752.6L1170.0 748.1L1170.1 748.6L1170.3 745.9L1170.4 746.6L1170.5 752.1L1170.7 756.1L1170.8 757.6L1170.9 749.4L1171.1 750.0L1171.2 752.8L1171.3 750.8L1171.5 754.5L1171.6 748.4L1171.7 746.7L1171.9 750.4L1172.0 753.8L1172.1 752.6L1172.3 752.8L1172.4 753.3L1172.5 746.6L1172.7 747.2L1172.8 752.9L1172.9 750.6L1173.1 750.8L1173.2 747.7L1173.3 749.7L1173.5 754.2L1173.6 748.1L1173.7 751.8L1173.9 748.0L1174.0 751.9L1174.1 758.4L1174.2 750.6L1174.4 755.8L1174.5 752.4L1174.6 748.6L1174.8 750.1L1174.9 751.5L1175.0 758.3L1175.2 748.3L1175.3 753.4L1175.4 741.0L1175.6 752.7L1175.7 753.4L1175.8 751.7L1176.0 755.7L1176.1 753.8L1176.2 752.8L1176.4 755.3L1176.5 751.1L1176.6 759.5L1176.8 754.5L1176.9 757.0L1177.0 754.0L1177.2 750.2L1177.3 751.0L1177.4 751.5L1177.6 750.4L1177.7 754.0L1177.8 755.8L1178.0 752.7L1178.1 753.3L1178.2 756.0L1178.4 750.6L1178.5 757.0L1178.6 756.3L1178.8 753.6L1178.9 753.8L1179.0 756.8L1179.2 748.7L1179.3 759.5L1179.4 756.1L1179.5 755.9L1179.7 758.5L1179.8 755.5L1179.9 754.9L1180.1 754.1L1180.2 748.5L1180.3 753.7L1180.5 752.3L1180.6 758.5L1180.7 762.4L1180.9 756.1L1181.0 756.4L1181.1 756.4L1181.3 755.5L1181.4 755.2L1181.5 760.9L1181.7 760.5L1181.8 759.8L1181.9 754.7L1182.1 763.4L1182.2 757.9L1182.3 759.1L1182.5 815.2L1182.6 815.2L1182.7 815.2L1182.9 815.2L1183.0 815.2L1183.1 815.2" fill="none" stroke="#0000ff" stroke-width="1.9" stroke-linejoin="round" clip-path="url(#c4)"/>
<rect x="1108.6" y="692.6" width="73.0" height="15.8" rx="2.4" fill="#fff" fill-opacity="0.8" stroke="#ccc" stroke-opacity="0.8" stroke-width="1.2"/>
<path d="M1111.3 700.5H1133.7" stroke="#0000ff" stroke-width="1.8"/>
<text x="1137.0" y="703.9" font-size="10.0" text-anchor="start" >x=1024</text>
<rect x="911.0" y="689.4" width="274.20000000000005" height="119.5" fill="none" stroke="#000" stroke-width="1.8"/>
<text x="911.90" y="831.7" font-size="9.72" text-anchor="middle" >0</text>
<text x="978.15" y="831.7" font-size="9.72" text-anchor="middle" >500</text>
<text x="1044.40" y="831.7" font-size="9.72" text-anchor="middle" >1000</text>
<text x="1110.65" y="831.7" font-size="9.72" text-anchor="middle" >1500</text>
<text x="1176.90" y="831.7" font-size="9.72" text-anchor="middle" >2000</text>
<text x="896.2" y="795.60" font-size="9.72" text-anchor="end" >0</text>
<text x="896.2" y="766.60" font-size="9.72" text-anchor="end" >50</text>
<text x="896.2" y="737.60" font-size="9.72" text-anchor="end" >100</text>
<text x="896.2" y="708.60" font-size="9.72" text-anchor="end" >150</text>
<path d="M911.90 808.9v7M978.15 808.9v7M1044.40 808.9v7M1110.65 808.9v7M1176.90 808.9v7M911.0 792.00h-7M911.0 763.00h-7M911.0 734.00h-7M911.0 705.00h-7" stroke="#000" stroke-width="1.8" fill="none"/>
<text x="1048.1" y="849.5" font-size="10.4" text-anchor="middle" >Y</text>
<text font-size="10.4" text-anchor="middle" transform="translate(866.4 750.0) rotate(-90)">counts</text>
<text font-size="10.4" text-anchor="middle" transform="translate(1194.3 749.5) rotate(90)">cut in y</text>
</g>
</svg></body></html>
